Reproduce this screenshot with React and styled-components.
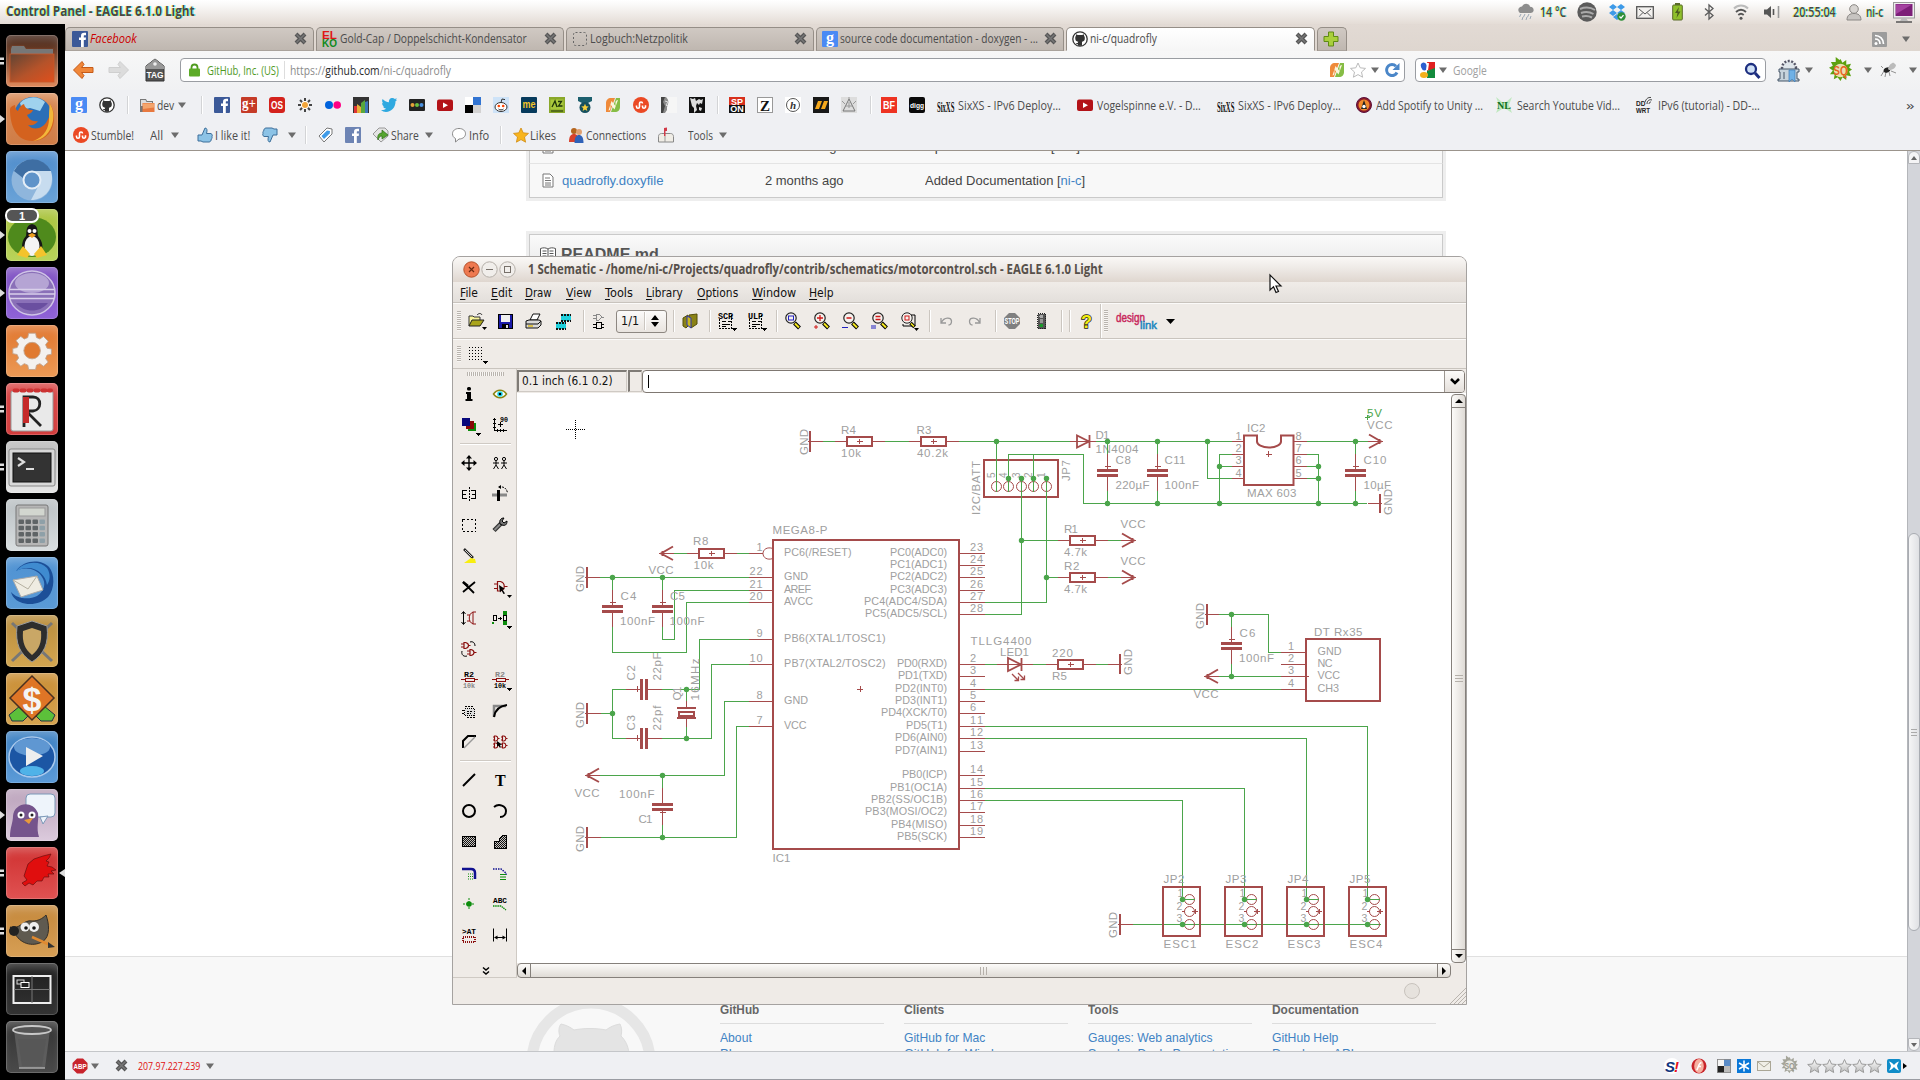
import React, { useLayoutEffect, useRef, useState } from "react";
import styled, { createGlobalStyle, css } from "styled-components";

const UI = '"Open Sans", "Noto Sans", sans-serif';
const RED = "#a54b4b";
const GREEN = "#4ba54b";
const GREY = "#a0a0a0";

const Global = createGlobalStyle`
  html, body { margin: 0; padding: 0; }
  body { width: 1920px; height: 1080px; overflow: hidden; background: #fff; font-family: ${UI}; }
  * { box-sizing: border-box; }
  svg { display: block; flex: none; overflow: visible; }
`;

/* ---------- text that keeps a given width ---------- */
const FitBox = styled.span`
  display: inline-block;
  width: ${(p) => p.$w}px;
  flex: none;
  white-space: pre;
`;
const FitInner = styled.span`
  display: inline-block;
  transform-origin: 0 50%;
  white-space: pre;
`;
function Fit({ w, children }) {
  const ref = useRef(null);
  const [s, setS] = useState(1);
  useLayoutEffect(() => {
    if (ref.current) setS(w / ref.current.offsetWidth);
  }, [w]);
  return (
    <FitBox $w={w}>
      <FitInner ref={ref} style={{ transform: `scaleX(${s})` }}>{children}</FitInner>
    </FitBox>
  );
}

/* ---------- rows of slots ---------- */
const StripRow = styled.div`
  display: flex;
  align-items: center;
  height: ${(p) => p.$h}px;
  padding-left: ${(p) => p.$pad || 0}px;
`;
const Cell = styled.div`
  flex: none;
  display: flex;
  align-items: center;
  width: ${(p) => (p.$w ? p.$w + "px" : "auto")};
`;
function Strip({ from, h, items }) {
  return (
    <StripRow $h={h} $pad={items[0][0] - from}>
      {items.map(([x, node], i) => (
        <Cell key={i} $w={i + 1 < items.length ? items[i + 1][0] - x : 0}>{node}</Cell>
      ))}
    </StripRow>
  );
}

/* ---------- small icons ---------- */
const Ico = ({ s = 16, w, h, vb, children, crisp }) => (
  <svg width={w || s} height={h || s} viewBox={vb || `0 0 ${w || s} ${h || s}`} fill="none" shapeRendering={crisp ? "crispEdges" : undefined}>
    {children}
  </svg>
);
const Letter = ({ bg, fg = "#fff", t, size = 11, font = "Liberation Sans", y = 12, r = 1, len, fs }) => (
  <Ico>
    <rect width="16" height="16" rx={r} fill={bg} />
    <text x="8" y={y} fontSize={size} fontFamily={font} fontWeight="bold" fontStyle={fs} textAnchor="middle" fill={fg} textLength={len} lengthAdjust="spacingAndGlyphs">{t}</text>
  </Ico>
);
const Down = ({ c = "#6c6c6c" }) => <Ico w={8} h={6}><path d="M0 0.5h8L4 6z" fill={c} /></Ico>;
const Fb = ({ bg = "#3b5998" }) => (
  <Ico><rect width="16" height="16" rx="1" fill={bg} /><path d="M9 16V9H7V6.6h2V5c0-2.2 1-3.2 3.2-3.2H14v2.5h-1.300C11.900 4.300 11.800 4.700 11.800 5.300v1.300H14L13.700 9h-1.900v7z" fill="#fff" /></Ico>
);
const Google = () => <Letter bg="#4a8af4" t="g" size={16} font="Liberation Serif" y={11.500} r={1} />;
const Octo = () => (
  <Ico><circle cx="8" cy="8" r="7.200" stroke="#333" strokeWidth="1.300" fill="#fff" /><path d="M3.400 8.500C3 6.500 3.500 5.300 4 4.800L3.900 3.200l2 .8h4.200l2-.8-.1 1.600c.8.8 1 2.200.7 3.700-.3 1.500-1.500 2-2.700 2.200v4H6v-1.500c-1.500.2-1.600-1-2.400-1.300l2.200.2c0-.6.2-1 .5-1.300C4.800 10.500 3.700 10 3.400 8.500z" fill="#333" /></Ico>
);
const Folder = () => (
  <Ico><path d="M1 2h6l1 2h6v11H1z" fill="#777" /><path d="M2 3h4.500l1 2H13v4H2z" fill="#ddd" /><rect x="3.500" y="6" width="12" height="9" fill="#e8793f" /><path d="M4 6.500h11v4L4 12z" fill="#f4a56d" /></Ico>
);
const YT = () => <Ico><rect y="2.500" width="16" height="11.500" rx="2" fill="#b31217" /><path d="M6 5.500l5 2.800-5 2.800z" fill="#fff" /></Ico>;
const Delicious = () => <Ico><path d="M0 0h8v8H0z" fill="#fff" /><path d="M8 0h8v8H8z" fill="#3274d2" /><path d="M0 8h8v8H0z" fill="#000" /><path d="M8 8h8v8H8z" fill="#d3d2d2" /></Ico>;
const Recoll = () => (
  <Ico>
    <path d="M1 15V6c0-3 2-5 5-5h4L5 15z" fill="#ef8a3a" />
    <path d="M15 1v9c0 3-2 5-5 5H6l5-14z" fill="#86bd45" />
    <path d="M3.500 13.500c1.500 0 2-1 2-2.500V7.500l4 5L13 3c-1.500 0-2.500 1-2.500 2.500V9l-4-5z" fill="#fbf6dc" />
  </Ico>
);
const Stumble = () => (
  <Ico><circle cx="8" cy="8" r="8" fill="#eb4924" /><path d="M3.500 8.500v1.200a1.500 1.500 0 003 0V6.500a1.500 1.500 0 013 0M9.500 8.500v1.200a1.500 1.500 0 003 0V8.200" stroke="#fff" strokeWidth="1.600" /></Ico>
);
const SixXS = () => (
  <Ico><text transform="translate(0 15) scale(.95 2.200)" fontSize="7" fontFamily="Liberation Serif" fontWeight="bold" fill="#111">SixXS</text></Ico>
);
const XIcon = ({ s = 13 }) => (
  <Ico s={s} vb="0 0 13 13"><path d="M2 2l9 9M11 2l-9 9" stroke="#555" strokeWidth="4" /><path d="M2.500 2.500l8 8M10.500 2.500l-8 8" stroke="#777" strokeWidth="1.500" /></Ico>
);
const SepLine = styled.span`
  display: block; width: 1px; height: 18px; background: #d3d4d6; border-right: 1px solid #fff; box-sizing: content-box;
`;

/* ---------- top panel ---------- */
const TopPanel = styled.header`
  height: 24px;
  background: linear-gradient(#ffffff, #faf9f8 20%, #e4dcd6);
  display: flex;
  color: #4a4744;
  font: 600 13.500px/24px ${UI};
  text-shadow: 1px 0 rgba(0, 255, 255, 0.6), -1px 0 rgba(255, 255, 0, 0.6);
`;
const PanelTitle = styled.div`
  width: 1517px; padding-left: 6px; font-weight: 700; line-height: 23px;
`;
const indicators = [
  [1517, <Ico w={18} h={18}><path d="M2 9a3.500 3.500 0 013-5.500C6 1 9 0 11 1.200c1.500.6 2 1.800 2 2.500 3 0 4 2 3.500 4.300-.5 1-1.500 2-3 2H4C3 10 2.300 9.600 2 9z" fill="#8d8d8d" /><path d="M4 11l-1.500 3M8 11l-1.500 3M12 11l-1.500 3M6 14l-1 3M10 14l-1 3M14 13l-1 3" stroke="#9aa7b5" /></Ico>],
  [1540, <Fit w={26}>14 °C</Fit>],
  [1577, <Ico w={20} h={20}><circle cx="10" cy="10" r="9.700" fill="#5b5b5b" /><path d="M3 7c5-2 11-1.500 15 1M4 11c4-1.500 9-1 12.500 1M5 14.500c3.500-1 7-.6 10 1" stroke="#aaa" strokeWidth="2" /></Ico>],
  [1608, <Ico w={18} h={17}><path d="M5 0l4 3-4 3-4-3zM13 0l4 3-4 3-4-3zM5 6l4 3-4 3-4-3zM13 6l4 3-4 3-4-3zM9 10l4 3-4 3-4-3z" fill="#3d9ae8" /><circle cx="13.500" cy="12.500" r="4.200" fill="#2f8f3a" /><path d="M11.500 12.500l1.500 1.600 2.500-3" stroke="#fff" strokeWidth="1.300" /></Ico>],
  [1636, <Ico w={18} h={13}><rect x=".7" y=".7" width="16.600" height="11.600" fill="#f3f1ef" stroke="#555" strokeWidth="1.300" /><path d="M3 3l6 5 6-5M3 10.500l4-4M15 10.500l-4-4" stroke="#555" /></Ico>],
  [1672, <Ico w={11} h={18}><rect x="3" y="0" width="5" height="3" fill="#5a6b2a" /><rect x=".7" y="2" width="9.600" height="15" rx="1" fill="#8fc02c" stroke="#5a6b2a" /><path d="M7 4L3 10h2.500L4.500 15 8.500 8.500H6z" fill="#4c5c20" /></Ico>],
  [1704, <Ico w={10} h={16}><path d="M1 4.500l8 7-4 3.500V1l4 3.500-8 7" stroke="#5b5b5b" strokeWidth="1.300" /></Ico>],
  [1733, <Ico w={16} h={16}><path d="M1 4.500c4-4 10-4 14 0" stroke="#bbb" strokeWidth="2" /><path d="M3 8c3-3 7-3 10 0M5.300 11c1.700-1.600 3.700-1.600 5.400 0" stroke="#555" strokeWidth="1.800" /><circle cx="8" cy="14.300" r="1.500" fill="#555" /></Ico>],
  [1764, <Ico w={16} h={16}><path d="M0 5.500h3L7 2v12l-4-3.500H0z" fill="#555" /><path d="M9.500 5v6" stroke="#555" strokeWidth="1.600" /><path d="M14.500 2v12" stroke="#999" strokeWidth="1.600" /></Ico>],
  [1793, <Fit w={43}>20:55:04</Fit>],
  [1846, <Ico w={16} h={17}><circle cx="8" cy="5" r="4.300" fill="#d7d4d1" stroke="#8a8784" /><path d="M1 16c0-5 3-6.500 7-6.500s7 1.500 7 6.500z" fill="#c7c4c1" stroke="#8a8784" /></Ico>],
  [1866, <Fit w={17}>ni-c</Fit>],
  [1893, <Ico w={22} h={21}><rect x=".5" y=".5" width="21" height="15.500" fill="#eee" stroke="#999" /><rect x="2.500" y="2" width="17" height="12" fill="#7c1f78" /><path d="M3 2.500h16L3 12z" fill="#a442a0" /><path d="M9 16h4l2 3H7z" fill="#bbb" /><path d="M3 20h16" stroke="#555" strokeWidth="1.500" /></Ico>],
];

/* ---------- launcher ---------- */
const Launcher = styled.nav`
  width: 65px; flex: none; background: #000; padding: 11px 0 0; display: flex; flex-direction: column; gap: 6px;
`;
const LaunchRow = styled.div`
  display: grid; grid-template-columns: 6px 52px 7px; align-items: center; height: 52px;
`;
const Tile = styled.div`
  width: 52px; height: 52px; border-radius: 5px;
  background: ${(p) => p.$bg};
  box-shadow: inset 0 0 0 1px rgba(255, 255, 255, 0.18), inset 0 8px 10px -4px rgba(255, 255, 255, 0.3);
`;
const Mark = ({ n, right }) =>
  !n ? <span /> : right ? (
    <Ico w={7} h={10}><path d="M7 1v8L1 5z" fill="#ddd" /></Ico>
  ) : n === 1 ? (
    <Ico w={6} h={10}><path d="M0 1v8l5-4z" fill="#ddd" /></Ico>
  ) : (
    <Ico w={6} h={10}><path d="M0 1.500h4v2.500H0zM0 6h4v2.500H0z" fill="#ddd" /></Ico>
  );
const T52 = ({ children }) => <svg width="52" height="52" viewBox="0 0 52 52" fill="none">{children}</svg>;
const grad = (a, b) => `linear-gradient(${a}, ${b})`;
const gearPath = "M22 10h8l1 5 4 1.700 4-3 5.500 5.500-3 4 1.700 4 5 1v6l-5 1-1.700 4 3 4L39 48l-4-3-4 1.700-1 5h-8l-1-5L17 45l-4 3-5.500-5.500 3-4-1.700-4-5-1v-6l5-1 1.700-4-3-4L13 13.700l4 3 4-1.700z";
const tiles = [
  { n: 2, bg: grad("#3a1c10", "#e08a5c"), el: <T52><path d="M4 46V12l2-2h12l2 3h28v33z" fill="#7a3f28" opacity=".55" /><path d="M5 14l1-3h12l2 3h27v5H5z" fill="#777" /><rect x="4" y="19" width="44" height="28" fill="url(#fo)" stroke="#c9582a" strokeWidth=".8" /><defs><linearGradient id="fo" x1="0" y1="0" x2="1" y2="1"><stop stopColor="#5f4434" /><stop offset=".55" stopColor="#b5532a" /><stop offset="1" stopColor="#e04f1c" /></linearGradient></defs></T52> },
  { n: 1, bg: grad("#d98c58", "#cf7c46"), el: <T52><circle cx="27" cy="23" r="19" fill="#2b6fb8" /><path d="M14 10c6-7 18-8 25-1l-5 9-10-3-8 2z" fill="#9fd2ee" /><path d="M4 16c0 18 7 32 22 32 14 0 22-10 22-23 0-7-2-11-4-14 1 8 0 12-3 17-4 8-14 10-19 4 5 1 8-1 10-4-6 1-9-2-11-6 2-1 5-2 6-5-5 0-8-2-9-6-3 1-5 4-6 7-2-1-3-3-3-6-3 1-5 2-5 4z" fill="#d4621e" /><path d="M44 11c3 5 4 10 3 17-2 12-10 19-20 20 12-4 16-14 16-22 0-6 0-10 1-15z" fill="#f3b63a" /></T52> },
  { bg: grad("#4d8bcb", "#6aa3d8"), el: <T52><circle cx="26" cy="29" r="20.500" fill="#8fb6dc" /><path d="M8 20a20.500 20.500 0 0137 0H26a9 9 0 00-9 7z" fill="#3e6ea3" /><path d="M34 32l-9 17c12 0 22-9 21-24l-1-5H29c4 2 6 6 5 12z" fill="#c7dcef" /><circle cx="26" cy="29" r="8.500" fill="#5f93c9" stroke="#e5eef7" strokeWidth="2" /></T52> },
  { n: 1, bg: grad("#a9c23c", "#b9d45a"), el: <T52><ellipse cx="26" cy="28" rx="24" ry="20" fill="#4f8a1c" /><path d="M20 45c-7-6-3-15 0-18 1-3-1-11 6-12 7 1 5 8 6 12 4 5 7 12 1 18z" fill="#161616" /><ellipse cx="26" cy="37" rx="7.500" ry="10" fill="#f4f4f4" /><circle cx="23.500" cy="22" r="2" fill="#fff" /><circle cx="28.500" cy="22" r="2" fill="#fff" /><path d="M22 26l4-2 4 2-4 3z" fill="#f0a020" /><path d="M11 46l6-9 7 8-3 4zM41 46l-6-9-7 8 3 4z" fill="#f3c32c" /><rect x="0" y="0" width="32" height="13" rx="6" fill="#555" stroke="#fff" strokeWidth="2" /><text x="16" y="10.500" fontSize="11" fontWeight="bold" fontFamily="Liberation Sans" fill="#fff" textAnchor="middle">1</text></T52> },
  { n: 1, bg: grad("#7d4fc0", "#8f62d8"), el: <T52><ellipse cx="26" cy="26" rx="23" ry="22" fill="#8a70b8" stroke="#cfc4e6" strokeWidth="1.500" /><ellipse cx="26" cy="16" rx="17" ry="10" fill="#b5a4d4" /><path d="M4 22.500h44M3 27h46M4 31.500h44" stroke="#d9d0ea" strokeWidth="1.500" /><path d="M10 36c8 10 24 10 32 0z" fill="#6a4fa0" /></T52> },
  { bg: grad("#e0742c", "#ec9a55"), el: <T52><g transform="translate(3.500 -.5) scale(.87)"><path d={gearPath} fill="#f4f1ee" stroke="#bfa28c" /><circle cx="26" cy="30" r="9.500" fill="#e07a30" stroke="#c2a48c" /></g></T52> },
  { n: 2, bg: grad("#d94848", "#d23c3c"), el: <T52><rect x="5" y="8" width="42" height="40" rx="2" fill="#e9e9e9" stroke="#999" /><path d="M8.500 7.500h3M15.500 7.500h3M22.500 7.500h3M29.500 7.500h3M36.500 7.500h3M43 7.500h2" stroke="#c33" strokeWidth="4" strokeLinecap="round" /><path d="M18 44V14h9c9 0 9 13 0 14h-7l15 15" stroke="#222" strokeWidth="2.800" /><rect x="17" y="14" width="6" height="26" fill="#c52a2a" /></T52> },
  { n: 2, bg: grad("#b8b8b8", "#e6e6e6"), el: <T52><rect x="3" y="8" width="46" height="37" rx="2" fill="#d8d8d8" stroke="#888" /><rect x="7" y="12" width="38" height="29" fill="#333" stroke="#111" /><path d="M12 17l6 4-6 4" stroke="#ddd" strokeWidth="2.200" /><path d="M20 28h8" stroke="#ddd" strokeWidth="2" /></T52> },
  { bg: grad("#b9bfc2", "#d9dee0"), el: <T52><rect x="10" y="6" width="32" height="41" rx="2" fill="#b6b6b6" stroke="#777" /><rect x="13" y="9" width="26" height="8" fill="#d2d6cf" stroke="#999" />{[0, 1, 2, 3].map((r) => [0, 1, 2, 3].map((c) => <rect key={r + "-" + c} x={12.500 + c * 7} y={20.500 + r * 6.300} width="5.500" height="4.500" rx="1" fill={c === 3 ? "#8ea0a8" : "#5f6466"} />))}</T52> },
  { bg: grad("#4f92d2", "#5a9ad6"), el: <T52><path d="M10 14C18 2 36 2 43 10c6 7 6 22-1 30-7 7-19 9-28 5-5-2-8-6-9-10 6 7 18 8 26 4 8-5 9-13 5-19-5-8-16-11-26-6z" fill="#1c4f98" /><path d="M10 14C18 4 34 3 41 11c4 6 3 13 0 17-1-9-9-17-19-17-4 0-8 1-12 3z" fill="#3f8bd0" /><path d="M7 23l24-4 6 14-22 7z" fill="#efece2" stroke="#aaa" /><path d="M7 23l15 9 9-13" stroke="#b5b0a0" /></T52> },
  { bg: grad("#b88c3c", "#d3a650"), el: <T52><path d="M6 8l40 38M46 8L6 46" stroke="#777" strokeWidth="3" /><path d="M26 6l15 5c2 18-3 28-15 36C14 39 9 29 11 11z" fill="#2d2d2d" stroke="#999" /><path d="M26 13l9 3c1 12-2 18-9 24-7-6-10-12-9-24z" fill="#c9a766" /></T52> },
  { bg: grad("#c98d34", "#d5a450"), el: <T52><path d="M3 42l11-9 9 9-6 6H6zM49 42l-11-9-9 9 6 6h11z" fill="#5cc03a" stroke="#234" /><path d="M26 3l22 22-22 22L4 25z" fill="#df7526" stroke="#4a3020" strokeWidth="1.500" /><text x="26" y="38" fontSize="34" fontFamily="Liberation Sans" fontWeight="bold" fill="#f4f4f4" textAnchor="middle">$</text></T52> },
  { bg: grad("#3a7ec0", "#5c9bd8"), el: <T52><ellipse cx="26" cy="26" rx="23" ry="20" fill="#1c56a4" stroke="#a9c9ec" strokeWidth="1.500" /><ellipse cx="26" cy="16" rx="18" ry="9" fill="#5f97d2" /><ellipse cx="26" cy="40" rx="12" ry="5" fill="#4fb2e8" /><path d="M20 16l17 9-17 10z" fill="#eee" /></T52> },
  { n: 1, bg: grad("#b9a0b9", "#dccbdd"), el: <T52><rect x="20" y="5" width="29" height="23" rx="4" fill="#eef4fb" stroke="#7b98b8" /><path d="M34 28l8-1-5 8z" fill="#eef4fb" stroke="#7b98b8" /><path d="M4 48c0-10 3-14 3-21C8 14 26 10 32 24c1 8-2 14 1 24z" fill="#75548c" /><circle cx="15" cy="26" r="3.500" fill="#fff" /><circle cx="26" cy="26" r="3.500" fill="#fff" /><circle cx="15" cy="26" r="1.500" fill="#222" /><circle cx="26" cy="26" r="1.500" fill="#222" /><path d="M18 31l9-2-4 6z" fill="#e89a3c" /></T52> },
  { n: 2, right: true, bg: grad("#cf3030", "#e05252"), el: <T52><path d="M16 36l5-3-3-4 2-6 2-6 6-5 9-3 8-2-2 4-3 3 3 1-2 4 5 1 4 3-5 1 3 3-6 0 1 3-5 0-2 4-5 0-4 4-4-2-4 3z" fill="#e00e0e" stroke="#5a0a0a" strokeWidth=".6" /></T52> },
  { n: 2, bg: grad("#c4873a", "#d79f55"), el: <T52><path d="M4 22c8 4 14-8 22-6 6 0 10-2 14-6 3 8 5 22-4 27-10 5-22 2-28-10z" fill="#5f5a50" stroke="#332e28" /><circle cx="8" cy="26" r="5" fill="#222" /><circle cx="19" cy="22" r="4.500" fill="#eee" /><circle cx="28" cy="22" r="5" fill="#eee" /><circle cx="20" cy="23" r="1.800" fill="#111" /><circle cx="28" cy="23" r="1.800" fill="#111" /><path d="M26 32l18 8" stroke="#e08a30" strokeWidth="2.500" /><path d="M42 37l7 5-7 1z" fill="#333" /></T52> },
  { bg: grad("#1e1e1e", "#333"), el: <T52><rect x="7.500" y="13" width="37" height="27" fill="none" stroke="#eee" strokeWidth="2" /><path d="M26 13v27M8 26.500h36" stroke="#777" /><rect x="11" y="17" width="7" height="4" stroke="#ddd" /><rect x="15" y="19.500" width="8" height="5" fill="#222" stroke="#fff" /></T52> },
  { bg: grad("#333", "#4a4a4a"), el: <T52><path d="M8 9l5 38h26l5-38z" fill="#6b6b6b" opacity=".65" /><path d="M12 18l4 27h20l4-27z" fill="#555" opacity=".7" /><ellipse cx="26" cy="9" rx="19" ry="4" fill="#555" stroke="#c8c8c8" strokeWidth="1.800" /><path d="M13 47h26" stroke="#aaa" strokeWidth="1.500" /></T52> },
];

/* ---------- browser ---------- */
const Body = styled.div`display: flex; height: 1056px;`;
const Browser = styled.main`
  flex: 1; min-width: 0; display: flex; flex-direction: column; font: 13.300px/18px ${UI}; color: #4c4c4c;
`;
const TabBar = styled.div`
  height: 27px; background: linear-gradient(#e2dad4, #ded6cf); display: flex; align-items: flex-end; padding-top: 3px;
`;
const Tab = styled.div`
  width: ${(p) => p.$w}px; height: 24px; margin-right: 2px; display: flex; align-items: center;
  padding: 0 6px 1px 5px; border: 1px solid #958e87; border-bottom-color: ${(p) => (p.$on ? "#f6f6f6" : "#aaa39c")};
  border-radius: 5px 5px 0 0;
  background: ${(p) => (p.$on ? "linear-gradient(#fff, #f6f6f6)" : "linear-gradient(#d0c9c3, #bfb7b0)")};
  ${(p) => p.$visited && css`color: #cc0000; font-style: italic; padding-left: 6px;`}
`;
const TabText = styled.span`flex: 1; margin-left: 2px; margin-top: -1px;`;
const TabTools = styled.div`
  margin-left: auto; align-self: stretch; display: flex; align-items: center; gap: 15px; padding-right: 10px;
`;
const NavBar = styled.div`
  height: 39px; background: linear-gradient(#f7f7f7, #f0f1f3); display: flex; align-items: flex-start; padding: 7px 0 0 7px;
`;
const NavIcon = styled.div`
  width: ${(p) => p.$w}px; height: 24px; display: flex; align-items: center; flex: none;
`;
const Field = styled.div`
  width: ${(p) => p.$w}px; height: 24px; flex: none; border: 1px solid #9a9da2; border-radius: 4px; background: #fff;
  display: flex; align-items: center; margin-right: ${(p) => p.$mr}px; padding: 0 4px 0 ${(p) => p.$pl}px;
`;
const Cert = styled.span`color: #4f9a1f; width: 84px; padding-left: 7px; flex: none;`;
const Url = styled.span`flex: 1; border-left: 1px solid #ddd; padding-left: 5px; color: #8c8c8c; b { font-weight: 400; color: #2b2b2b; }`;
const Hint = styled.span`flex: 1; color: #a0a0a0; padding-left: 6px;`;
const Marks = styled.div`background: #eff0f3; height: 61px; border-bottom: 1px solid #9b948c;`;
const Spread = styled.div`display: flex; align-items: center; gap: ${(p) => p.$g}px;`;

const SQ = ({ c = "#5da10f", t = "#e8641e", s = 23, paper = "#eadfb0" }) => (
  <Ico s={s} vb="0 0 24 24"><path d="M12 0l2 4 4-3 0 5 5-1-2 4 3 2-3 2 2 5-5-1 0 5-4-3-2 4-3-4-4 2 1-5-5 0 3-4-4-3 4-2-2-4 5 0 0-5 4 3z" fill={c} /><circle cx="12" cy="12" r="7" fill={paper} /><text x="12" y="17" fontSize="13" fontFamily="Liberation Sans" fontWeight="bold" textAnchor="middle" fill={t} textLength="15" lengthAdjust="spacingAndGlyphs">SQ</text></Ico>
);
const Arrow = ({ back }) => (
  <Ico w={22} h={20}>{back ? <path d="M10 1.500L1.500 10 10 18.500l2-3-2.500-3H21v-5H9.500l2.500-3z" fill="#f0873a" stroke="#c65a17" /> : <path d="M12 1.500L20.500 10 12 18.500l-2-3 2.500-3H1v-5h11.500l-2.500-3z" fill="#dcdcdc" stroke="#cfcfcf" />}</Ico>
);
const Thumb = ({ flip }) => (
  <Ico><g transform={flip ? "rotate(180 8 8)" : undefined}><path d="M1 8h4l3-7c2 0 2.500 2 1.500 5.500H14c1.500 1 1.500 2 1 3 .3 1 0 2-.7 2.500 0 1.500-.8 3-2.300 3H6l-2-1H1z" fill="#8cc3e6" stroke="#3d6f9a" /></g></Ico>
);

const bookmarks = [
  [71, <Google />], [99, <Octo />], [127, <SepLine />], [139, <Folder />],
  [157, <Fit w={17}>dev</Fit>], [178, <Down />], [201, <SepLine />],
  [214, <Fb />],
  [241, <Letter bg="#c53b27" t="g+" size={14} font="Liberation Serif" y={11} len={14} />],
  [269, <Letter bg="#d4221c" t="OS" size={10} len={12} y={11.500} r={3} />],
  [297, <Ico><g stroke="#444" strokeWidth="2">{[0, 45, 90, 135, 180, 225, 270, 315].map((a) => <path key={a} d="M8 1v3" transform={`rotate(${a} 8 8)`} />)}</g><circle cx="8" cy="8" r="3.600" fill="#f2a53a" stroke="#fff" /></Ico>],
  [325, <Ico><circle cx="4" cy="8" r="4" fill="#0063dc" /><circle cx="12.200" cy="8" r="3.800" fill="#ff0084" /></Ico>],
  [353, <Ico><rect width="16" height="16" fill="#333" /><path d="M1 16V9h3v7z" fill="#d33" /><path d="M4 16V7l4 3v6z" fill="#e8b03a" /><path d="M8 16V6l4-3v13z" fill="#58a83c" /><path d="M12 16V5l3-1v12z" fill="#3d76b8" /></Ico>],
  [381, <Ico><path d="M0 13c2 .2 4-.3 5-1.500-1.500 0-2.500-1-3-2h1.400C2 9 1 7.500 1 6l1.400.4C1 5.300.8 3.500 1.600 2 3.300 4 5.500 5.200 8 5.300 7.500 2.500 9.500 1 11.400 1c1 0 1.800.4 2.400 1l2-.8c-.2.800-.700 1.400-1.300 1.800L16 2.700c-.4.700-1 1.200-1.500 1.600C14.800 10 10.500 15 5 15c-2 0-3.500-.800-5-2z" fill="#2fa9e0" /></Ico>],
  [409, <Ico><rect y="2" width="16" height="12" rx="1" fill="#222" /><circle cx="3.500" cy="8" r="2" fill="#e8a23a" /><circle cx="8" cy="8" r="2" fill="#6cc040" /><circle cx="12.500" cy="8" r="2" fill="#4a90e0" /></Ico>],
  [437, <YT />], [465, <Delicious />],
  [493, <Ico><rect width="16" height="16" fill="#cee3f8" /><ellipse cx="8" cy="10" rx="6" ry="4.500" fill="#fff" stroke="#333" /><circle cx="5.800" cy="9" r="1.300" fill="#f40" /><circle cx="10.200" cy="9" r="1.300" fill="#f40" /><path d="M8 5.500L9 2l3 .6M5.500 12c1.500 1.200 3.500 1.200 5 0" stroke="#333" /></Ico>],
  [521, <Letter bg="#063a5c" fg="#f3c52a" t="me" size={10} y={10.500} len={13} />],
  [549, <Ico><rect width="16" height="16" fill="#8aa82a" /><rect x="1.500" y="2.500" width="13" height="10" fill="#a9c83c" /><path d="M3 10l3-6 2 6M9 4.500h3.500L9.500 9h4" stroke="#20350a" strokeWidth="1.300" /><path d="M2 14h12" stroke="#20350a" /></Ico>],
  [577, <Ico><path d="M1 0h14v4l-4 2H5L1 4z" fill="#1c5f6e" /><circle cx="8" cy="10.500" r="5.500" fill="#16505e" /><path d="M8 6.800l1.100 2.500 2.600.2-2 1.800.6 2.600L8 12.500l-2.300 1.400.6-2.600-2-1.800 2.600-.2z" fill="#f5cf3a" /></Ico>],
  [605, <Recoll />], [633, <Stumble />],
  [661, <Ico><rect width="16" height="16" fill="#f6f6f6" /><path d="M0 0h5c3 3 3 6 1 9v4L4 16H0z" fill="#8a8a8a" /><path d="M0 0h4L2 5l2 4-2 7H0z" fill="#444" /><path d="M4 4l3 1-2 3 2 2" stroke="#ddd" /></Ico>],
  [689, <Ico><rect width="16" height="16" fill="#111" /><path d="M1 1l3 1 2-1 1 3 3-2 2 1 2-1-1 5-2-1-1 2-2-2-1 3 1 4-3 3 0-5-2-2zM10 10l3 1-1 3-2-1z" fill="#ddd" /></Ico>],
  [717, <SepLine />],
  [729, <Ico><rect width="16" height="8" fill="#d8301c" /><rect y="8" width="16" height="8" fill="#111" /><text x="8" y="7.700" fontSize="9" fontFamily="Liberation Sans" fontWeight="bold" textAnchor="middle" fill="#fff">SP</text><text x="8" y="15.300" fontSize="9" fontFamily="Liberation Sans" fontWeight="bold" textAnchor="middle" fill="#fff">ON</text></Ico>],
  [757, <Ico><rect x=".5" y=".5" width="15" height="15" fill="#fff" stroke="#999" /><text x="8" y="13.500" fontSize="15" fontFamily="Liberation Serif" fontWeight="bold" textAnchor="middle" fill="#111">Z</text></Ico>],
  [785, <Ico><rect width="16" height="16" fill="#fff" /><circle cx="8" cy="8" r="6.500" stroke="#555" /><text x="8" y="12" fontSize="11" fontFamily="Liberation Serif" fontStyle="italic" fontWeight="bold" textAnchor="middle" fill="#333">h</text></Ico>],
  [813, <Ico><rect width="16" height="16" fill="#181818" /><path d="M2 12l3-8h4l-3 8zM8 12l3-8h4l-3 8z" fill="#f5a81c" /></Ico>],
  [841, <Ico><rect width="16" height="16" fill="#ddd" /><path d="M8 2l6 12H2z" stroke="#777" /><path d="M8 5v6M5 9h6M1 4l3 3M15 4l-3 3M8 0v2" stroke="#999" /></Ico>],
  [870, <SepLine />],
  [881, <Letter bg="#ee3322" t="BF" size={11} len={12} r={0} />],
  [909, <Letter bg="#0a0a0a" t="digg" size={8} len={14} y={10.500} r={2} />],
  [937, <SixXS />], [958, <Fit w={103}>SixXS - IPv6 Deploy...</Fit>],
  [1077, <YT />], [1097, <Fit w={104}>Vogelspinne e.V. - D...</Fit>],
  [1217, <SixXS />], [1238, <Fit w={103}>SixXS - IPv6 Deploy...</Fit>],
  [1356, <Ico><circle cx="8" cy="8" r="7.500" fill="#8b1c28" stroke="#5a0f3c" /><circle cx="8" cy="8" r="5.500" fill="#f08a2c" /><path d="M5 12l3-9 3 9z" fill="#222" /><circle cx="8" cy="9.500" r="1.700" fill="#fff" /></Ico>],
  [1376, <Fit w={107}>Add Spotify to Unity ...</Fit>],
  [1496, <Ico><path d="M0 0l6 5h4l6-5-3 8 3 8-6-4H6l-6 4 3-8z" fill="#bfe8bf" /><text x="8" y="12" fontSize="10.500" fontFamily="Liberation Serif" fontWeight="bold" textAnchor="middle" fill="#107020" textLength="14" lengthAdjust="spacingAndGlyphs">NL</text></Ico>],
  [1517, <Fit w={103}>Search Youtube Vid...</Fit>],
  [1636, <Ico><text x="0" y="9" fontSize="6.500" fontFamily="Liberation Sans" fontWeight="bold" fill="#222">DD</text><text x="0" y="16" fontSize="6.500" fontFamily="Liberation Sans" fontWeight="bold" fill="#222" textLength="14" lengthAdjust="spacingAndGlyphs">WRT</text><path d="M11 7c0-3 2-5 5-4M9 5c1-3 3-5 6-4.500M13 7c0-1.500 1-2 2-2" stroke="#444" /></Ico>],
  [1658, <Fit w={102}>IPv6 (tutorial) - DD-...</Fit>],
  [1906, <Fit w={9}>»</Fit>],
];

const stumbleBar = [
  [73, <Stumble />], [91, <Fit w={43}>Stumble!</Fit>], [150, <Fit w={13}>All</Fit>], [171, <Down />],
  [197, <Thumb />], [215, <Fit w={35}>I like it!</Fit>], [262, <Thumb flip />], [288, <Down />], [305, <SepLine />],
  [317, <Ico><path d="M2 9L10 1l5 1v5L7 15z" fill="#fff" stroke="#777" /><path d="M4.500 9L10 3.500l3 .5-.3 2.500L7 12z" fill="#3f9be8" /></Ico>],
  [345, <Fb bg="#6d84b4" />],
  [373, <Ico><path d="M0 7l6-6h6l3 3v5l-7 6z" fill="#e4e4e4" stroke="#999" /><path d="M5 13c-1-5 1-7 4-7V3l6 5-6 4V9c-2 0-3 1-4 4z" fill="#55a52f" stroke="#2f6c18" strokeWidth=".7" /></Ico>],
  [391, <Fit w={28}>Share</Fit>], [425, <Down />],
  [451, <Ico><path d="M8 1.500c4 0 6.500 2.300 6.500 5.200S12 12 8 12l-3.500 3v-3.500C2.500 10.500 1.500 9 1.500 6.700 1.500 3.800 4 1.500 8 1.500z" fill="#fff" stroke="#888" /></Ico>],
  [469, <Fit w={20}>Info</Fit>], [500, <SepLine />],
  [513, <Ico><path d="M8 1l2.200 4.800 5.300.6-4 3.600 1.100 5.200L8 12.600l-4.600 2.600L4.500 10l-4-3.600 5.300-.6z" fill="#f8b51d" stroke="#d08a10" strokeWidth=".8" /></Ico>],
  [530, <Fit w={26}>Likes</Fit>],
  [569, <Ico w={14} h={16}><circle cx="5" cy="4" r="3" fill="#b5651d" /><path d="M0 15c0-6 2-8 5-8s5 2 5 8z" fill="#d8412c" /><circle cx="10" cy="5" r="3" fill="#e0a070" /><path d="M5.500 16c0-6 2-8 4.500-8s4.500 2 4.500 8z" fill="#2f62b8" /></Ico>],
  [586, <Fit w={60}>Connections</Fit>],
  [658, <Ico><path d="M.5 15V9.500c0-3 3-3 3-3h9c3 0 3 3 3 3V15z" fill="#f0ede6" stroke="#888" /><path d="M7 15V9" stroke="#999" /><path d="M6 9V1l3-.5V4L7.500 4v5z" fill="#d23a48" /></Ico>],
  [688, <Fit w={25}>Tools</Fit>], [719, <Down />],
];

/* ---------- web page ---------- */
const Viewport = styled.div`flex: none; height: 900px; display: flex;`;
const PageBody = styled.div`
  flex: 1; overflow: hidden; background: #fff; font: 13.300px/17px "Liberation Sans", Arial, sans-serif; color: #444;
  a { color: #4183c4; }
`;
const FileBox = styled.div`
  width: 920px; margin: -21px 0 30px 461px; border: solid #eee; border-width: 0 3px 3px;
`;
const FileRow = styled.div`
  display: flex; align-items: center; height: ${(p) => p.$h}px; background: #f8f8f8;
  border: solid #cacaca; border-width: 0 1px ${(p) => (p.$last ? 1 : 0)}px; padding-left: 12px;
  & + & { border-top: 1px solid #e4e4e4; }
`;
const FileCol = styled.div`width: ${(p) => p.$w}px; flex: none; display: flex;`;
const Readme = styled.div`
  width: 920px; height: 690px; margin-left: 461px; border: 3px solid #eee; background: #fff;
`;
const ReadmeHead = styled.div`
  height: 684px; border: 1px solid #cacaca; background: linear-gradient(#fafafa, #eaeaea 33px, #fff 34px);
  font: 700 16.500px/20px "Liberation Sans", Arial, sans-serif; color: #555; display: flex; align-items: flex-start; gap: 5px; padding: 9px 0 0 10px;
  svg { margin-top: 3px; }
`;
const Footer = styled.footer`
  margin-top: 35px; height: 95px; border-top: 1px solid #e0e0e0; background: #f8f8f8; display: flex; padding-left: 461px;
`;
const FootCols = styled.div`display: flex; gap: 20px; padding: 45px 0 0 64px;`;
const FootCol = styled.div`
  width: 164px; display: flex; flex-direction: column;
  h4 { margin: 0 0 5px; height: 22px; flex: none; border-bottom: 1px solid #ddd; font: 700 13.300px/15px "Liberation Sans", Arial, sans-serif; color: #666; }
  a { height: 16px; line-height: 17px; flex: none; }
`;
const Scroll = styled.div`
  width: 13px; flex: none; background: #d3d5da; border-left: 1px solid #b4b6ba; display: flex; flex-direction: column;
`;
const ScrollBtn = styled.div`
  height: 13px; flex: none; background: #f4f4f5; border: 1px solid #b4b6ba; border-radius: ${(p) => (p.$up ? "6px 6px 0 0" : "0 0 6px 6px")};
  display: flex; align-items: center; justify-content: center; margin-top: ${(p) => (p.$up ? 0 : "auto")};
`;
const ScrollThumb = styled.div`
  height: 398px; flex: none; margin-top: 369px; border: 1px solid #a9acb2; border-radius: 6px; background: linear-gradient(90deg, #f5f5f6, #e0e1e4);
  display: flex; align-items: center; justify-content: center;
`;
const FileIcon = () => <Ico w={12} h={15}><path d="M1 1h7l3 3v10H1z" fill="#fff" stroke="#777" /><path d="M3 5h5M3 7.500h6M3 10h6M3 12h6" stroke="#777" /></Ico>;
const footer = [
  ["GitHub", 39, [["About", 32], ["Blog", 27]]],
  ["Clients", 40, [["GitHub for Mac", 81], ["GitHub for Windows", 112]]],
  ["Tools", 30, [["Gauges: Web analytics", 125], ["Speaker Deck: Presentations", 160]]],
  ["Documentation", 87, [["GitHub Help", 66], ["Developer API", 82]]],
];
const StatusBar = styled.div`
  height: 29px; background: #eff0f3; border-top: 1px solid #c4c6c9; border-bottom: 1px solid #9a9ca2; color: #e01010; font-size: 11.500px;
`;
const Star5 = () => (
  <Ico w={75} h={16}>{[0, 1, 2, 3, 4].map((i) => <path key={i} transform={`translate(${i * 15} 0)`} d="M7.500 1.500l2 4.500 4.800.5-3.600 3.200 1 4.800-4.200-2.500-4.200 2.500 1-4.800L.7 6.500 5.500 6z" fill={`url(#stg)`} stroke="#9b9b9b" />)}<defs><linearGradient id="stg" x1="0" y1="0" x2="0" y2="1"><stop stopColor="#fff" /><stop offset="1" stopColor="#bbb" /></linearGradient></defs></Ico>
);
const statusItems = [
  [72, <Ico><path d="M5 .5h6L15.500 5v6L11 15.500H5L.5 11V5z" fill="#c8232c" /><text x="8" y="11" fontSize="7" fontFamily="Liberation Sans" fontWeight="bold" fill="#fff" textAnchor="middle" textLength="13" lengthAdjust="spacingAndGlyphs">ABP</text></Ico>],
  [91, <Down />], [115, <XIcon />], [138, <Fit w={62}>207.97.227.239</Fit>], [206, <Down />],
  [1664, <Ico><circle cx="8" cy="8" r="8" fill="#fff" /><text x="1" y="13.500" fontSize="15" fontFamily="Liberation Sans" fontWeight="bold" fontStyle="italic" fill="#12357c">S<tspan fill="#e8141c" dx="-1">!</tspan></text></Ico>],
  [1691, <Ico><circle cx="8" cy="8" r="7.500" fill="#c8242a" /><ellipse cx="8" cy="8" rx="4.800" ry="7" fill="#f6b0a0" /><path d="M5.500 12c2-1 1.500-7 5-7.500M7 8.500h3" stroke="#fff" strokeWidth="1.500" /></Ico>],
  [1717, <Ico w={14} h={14} vb="0 0 16 16"><path d="M0 0h8v8H0z" fill="#f4f4f4" /><path d="M8 0h8v8H8z" fill="#5a8cc8" /><path d="M0 8h8v8H0z" fill="#222" /><path d="M8 8h8v8H8z" fill="#bbb" /><rect x=".5" y=".5" width="15" height="15" stroke="#888" /></Ico>],
  [1737, <Ico w={14} h={14}><rect width="14" height="14" fill="#0a78d8" /><path d="M7 1.500v11M2 4l10 6M12 4L2 10" stroke="#fff" strokeWidth="1.500" /></Ico>],
  [1757, <Ico w={14} h={10}><rect x=".5" y=".5" width="13" height="9" fill="#f0eee6" stroke="#aaa696" /><path d="M1 1l6 5 6-5" stroke="#aaa696" /></Ico>],
  [1781, <SQ c="#a5a59a" t="#999990" paper="#e8e8e4" s={17} />],
  [1807, <Star5 />],
  [1887, <Ico w={14} h={14}><rect width="14" height="14" rx="2" fill="#108cc8" /><path d="M2 2.500c2 .5 3.500 1.500 5 3.500 1.500-2 3-3 5-3.500-1 2-1.700 3-2 4.500.3 1.500 1 3 2 4.500-2-.5-3.500-1.500-5-3.500-1.500 2-3 3-5 3.500 1-1.500 1.700-3 2-4.500-.3-1.500-1-2.500-2-4.500z" fill="#fff" /></Ico>],
  [1903, <Ico w={4} h={6}><path d="M0 0l4 3-4 3z" fill="#000" /></Ico>],
];

/* ---------- EAGLE window ---------- */
const Win = styled.section`
  position: absolute; left: 452px; top: 256px; width: 1015px; height: 749px;
  border: 1px solid #a5a2a0; border-radius: 8px 8px 0 0; background: #efebe7; overflow: hidden;
  display: flex; flex-direction: column; font: 12.500px/16px "DejaVu Sans", sans-serif; color: #111;
`;
const TitleBar = styled.div`
  height: 25px; flex: none; background: linear-gradient(#faf8f6, #eeeae6 45%, #dfd6cf); display: flex; align-items: center; gap: 1px; padding-left: 10px;
  font: 700 13.500px/22px ${UI}; color: #57504a;
`;
const TitleText = styled.div`margin: -2px 0 0 11px;`;
const WinBtn = ({ kind }) => (
  <Ico s={17}>
    <circle cx="8.500" cy="8.500" r="7.700" fill={kind === "x" ? "#ee7950" : "#f1eeeb"} stroke={kind === "x" ? "#b5532e" : "#b5afa9"} />
    {kind === "x" && <path d="M6 6l5 5M11 6l-5 5" stroke="#6b2a12" strokeWidth="1.200" />}
    {kind === "-" && <path d="M5 8.500h7" stroke="#77706a" strokeWidth="1.200" />}
    {kind === "o" && <rect x="5.500" y="5.500" width="6" height="6" stroke="#77706a" />}
  </Ico>
);
const MenuBar = styled.div`
  height: 21px; flex: none; background: linear-gradient(#f0ece8, #e3dfdb); border-bottom: 1px solid #c8c3bd; line-height: 20px; padding-top: 1px;
  u { text-decoration-thickness: 1px; text-underline-offset: 2px; }
`;
const ToolBar = styled.div`
  height: ${(p) => p.$h}px; flex: none; border-top: 1px solid #fbfaf9; border-bottom: 1px solid #c9c4be;
`;
const Main = styled.div`display: flex; height: 609px; flex: none;`;
const Toolbox = styled.aside`
  width: 64px; flex: none; border-right: 1px solid #cfcac4; border-bottom: 1px solid #cfcac4; display: flex; flex-direction: column; align-items: stretch;
`;
const TGrip = styled.div`
  height: 4px; width: 37px; margin: 3px 0 2px 14px; background: repeating-linear-gradient(90deg, #b9b4ae 0 1px, #f8f6f4 1px 2px);
`;
const TGrid = styled.div`display: grid; grid-template-columns: 31.500px 31.500px; grid-auto-rows: 31px;`;
const TSlot = styled.div`display: flex; align-items: center; justify-content: center;`;
const TSep = styled.div`height: 2px; margin: ${(p) => p.$m}; background: #cfcac4; border-bottom: 1px solid #fff;`;
const Chevron = styled.div`flex: 1; display: flex; justify-content: center; align-items: flex-end; padding: 0 0 2px 3px;`;
const Right = styled.div`flex: 1; min-width: 0; display: flex; flex-direction: column;`;
const CmdRow = styled.div`height: 24px; display: flex; padding-top: 1px; flex: none;`;
const Sunken = styled.div`
  width: ${(p) => p.$w}px; height: 22px; margin-right: ${(p) => p.$mr || 0}px; border: solid #7f7b76; border-width: 2px 1px 1px 2px;
  border-right-color: #cfcac4; border-bottom-color: #cfcac4; padding-left: 3px; line-height: 18px; flex: none;
`;
const CmdInput = styled.div`
  flex: 1; height: 23px; margin-right: 1px; border: 1px solid #7f7872; border-radius: 4px; background: #fff; display: flex; align-items: stretch; padding-left: 5px;
`;
const Caret = styled.div`width: 1px; margin: 4px 0; background: #000;`;
const Drop = styled.div`
  width: 20px; margin-left: auto; border-left: 1px solid #9c9690; background: linear-gradient(#fcfbfa, #e4dfda); border-radius: 0 3px 3px 0; display: flex; align-items: center; justify-content: center;
`;
const CanvasRow = styled.div`display: flex; height: 570px; background: #fff;`;
const CanvasArea = styled.div`width: 934px; height: 570px; overflow: hidden; flex: none;`;
const VBar = styled.div`
  width: 15px; margin: 1px 0 0; border: 1px solid #85807b; border-radius: 4px; background: linear-gradient(90deg, #fcfbf9, #dfdbd6);
  display: flex; flex-direction: column; justify-content: space-between; align-items: center; height: 569px;
`;
const HBar = styled.div`
  width: 934px; height: 15px; border: 1px solid #85807b; border-radius: 4px; background: linear-gradient(#fcfbf9, #dfdbd6); display: flex; justify-content: space-between;
`;
const BarBtn = styled.div`
  width: 13px; height: 13px; flex: none; display: flex; align-items: center; justify-content: center; border: 0 solid #85807b;
  border-width: ${(p) => p.$b};
`;
const BarGrip = styled.div`align-self: center; margin: auto;`;
const WinStatus = styled.div`
  flex: 1; display: flex; justify-content: flex-end; align-items: center;
`;
const SpinBox = styled.div`
  width: 51px; height: 23px; border: 1px solid #8d8781; border-radius: 3px; background: linear-gradient(#fbfaf9, #e9e4df); display: flex; align-items: center; padding-left: 4px; gap: 5px; line-height: 20px;
`;
const VSep = styled.div`width: 2px; height: ${(p) => p.$h || 22}px; background: #cbc6c0; border-right: 1px solid #fff;`;
const VGrip = styled.div`width: 4px; height: ${(p) => p.$h || 20}px; background: repeating-linear-gradient(#b9b4ae 0 1px, #f8f6f4 1px 2px);`;

const menus = [
  [459.500, 18, "F", "ile"], [491, 21, "E", "dit"], [525, 27, "D", "raw"], [566, 26, "V", "iew"], [605, 28, "T", "ools"],
  [646, 37, "L", "ibrary"], [697, 41, "O", "ptions"], [752, 44, "W", "indow"], [809, 25, "H", "elp"],
];

const DD = ({ x = 14, y = 16 }) => <path d={`M${x} ${y}h5l-2.500 3z`} fill="#000" />;
const Mag = ({ c, extra }) => (
  <Ico w={18} h={18}><path d="M10.500 11l5 5" stroke="#000" strokeWidth="4" /><path d="M11 11.500l4 4" stroke="#f4e820" strokeWidth="2" /><circle cx="7" cy="6" r="5.200" fill="#f6f2ee" stroke="#222" strokeWidth="1.200" />{c}{extra}</Ico>
);
const Doc = ({ t }) => (
  <Ico w={18} h={18} crisp><path d="M1.500 7v9.500h12V2" stroke="#000" strokeDasharray="2 1" /><path d="M4 9.500h4M10 9.500h3M4 12.500h8M4 14.500h4" stroke="#000" /><text x="0" y="7" fontSize="8.500" fontFamily="Liberation Mono" fontWeight="bold" fill="#000" textLength="15">{t}</text><DD x={14} y={16} /></Ico>
);
const toolbar = [
  [457, <VGrip />],
  [468, <Ico w={19} h={18}><path d="M1 14V4h4l1 1h6v3" fill="#f8f49a" stroke="#333" /><path d="M1 14l3-6h12l-4 6z" fill="#a9a41a" stroke="#222" /><path d="M9 3c2-2 4-2 5 0" stroke="#222" /><DD x={14} y={15} /></Ico>],
  [498, <Ico w={15} h={15} crisp><rect x=".5" y=".5" width="14" height="14" fill="#1a1aa8" stroke="#000" /><rect x="3" y="1" width="9" height="7" fill="#efefef" /><rect x="4" y="10" width="7" height="4" fill="#000" /><rect x="8" y="11" width="2" height="3" fill="#ddd" /></Ico>],
  [525, <Ico w={17} h={17}><path d="M5 7l3-6h7l-3 6z" fill="#fff" stroke="#111" /><path d="M1 8l3-1h10l2 1v4l-3 3H1z" fill="#d8d8d8" stroke="#111" /><path d="M1 11h12M13 11l3-3" stroke="#111" /><path d="M3 13h5" stroke="#d8b820" strokeWidth="1.500" /></Ico>],
  [556, <Ico w={15} h={17} crisp><path d="M5 1h10v7H5z" fill="#1ed0dc" /><path d="M5 1.500h10M5 7.500h10" stroke="#111" strokeWidth="2" strokeDasharray="2 1" /><path d="M0 9h10v7H0z" fill="#1ed0dc" /><path d="M0 9.500h10M0 15.500h10" stroke="#111" strokeWidth="2" strokeDasharray="2 1" /></Ico>],
  [583, <VSep />],
  [593, <Ico w={11} h={17} crisp><path d="M3 1h3l3 3-3 3H3zM0 2.500h3M0 5.500h3M9 4h2" stroke="#888" /><path d="M3 9.500h5v6H3zM0 11h3M0 14h3M8 11h3M8 14h3" stroke="#000" /></Ico>],
  [616, <SpinBox><Fit w={18}>1/1</Fit><VSep $h={18} /><Ico w={8} h={12}><path d="M0 5h8L4 0zM0 7h8l-4 5z" fill="#000" /></Ico></SpinBox>],
  [673, <VSep />],
  [682, <Ico w={16} h={16}><path d="M1 5l5-3v11l-2 2-3-2zM7 2l8-1v10l-6 4z" fill="#8a8216" stroke="#554f08" /><path d="M5 3l4 2v10l-4-3z" fill="#c9b81c" stroke="#2c35b8" /></Ico>],
  [709, <VSep />],
  [718, <Doc t="SCR" />], [748, <Doc t="ULP" />],
  [776, <VSep />],
  [784, <Mag c={<rect x="4.500" y="4" width="5" height="4" stroke="#2020c0" />} />],
  [813, <Mag c={<path d="M4 6h6M7 3v6" stroke="#d01818" strokeWidth="1.300" />} extra={<path d="M1 15h4M3 13v4" stroke="#d01818" />} />],
  [842, <Mag c={<path d="M4.500 6h5" stroke="#d01818" strokeWidth="1.300" />} extra={<path d="M0 15.500h6" stroke="#2020c0" />} />],
  [871, <Mag c={<path d="M4.500 4.500h5M4.500 7.500h5" stroke="#d01818" strokeWidth="1.300" />} extra={<path d="M0 14h5M0 16h5" stroke="#2020c0" />} />],
  [900, <Ico w={19} h={18}><path d="M10 3h5v11H3v-2" stroke="#000" /><path d="M10.500 11l4 4" stroke="#000" strokeWidth="3.500" /><path d="M11 11.500l3 3" stroke="#f4e820" strokeWidth="1.700" /><circle cx="7" cy="6" r="5.200" fill="#f6f2ee" stroke="#222" /><rect x="5" y="4" width="4" height="4" stroke="#d01818" /><DD x={14} y={16} /></Ico>],
  [929, <VSep />],
  [940, <Ico w={13} h={10}><path d="M1 2v5h5M1.500 6.500C4 1 11 1 11.500 5c0 2-1 4-3 4" stroke="#999" strokeWidth="1.300" /></Ico>],
  [968, <Ico w={13} h={10}><path d="M12 2v5H7M11.500 6.500C9 1 2 1 1.500 5c0 2 1 4 3 4" stroke="#999" strokeWidth="1.300" /></Ico>],
  [995, <VSep />],
  [1004, <Ico w={16} h={16}><path d="M5 0h6l5 5v6l-5 5H5l-5-5V5z" fill="#808080" /><text x="8" y="11" fontSize="8.500" fontFamily="Liberation Sans" fontWeight="bold" fill="#fff" textAnchor="middle" textLength="15" lengthAdjust="spacingAndGlyphs">STOP</text></Ico>],
  [1037, <Ico w={9} h={17} crisp><rect x=".5" y=".5" width="8" height="15" fill="#555" stroke="#222" strokeDasharray="1 1" /><circle cx="4.500" cy="3.500" r="2" fill="#aaa" /><circle cx="4.500" cy="8" r="2" fill="#999" /><circle cx="4.500" cy="12.500" r="2" fill="#1a9a2a" /></Ico>],
  [1061, <VSep />], [1069, <VSep />],
  [1081, <Ico w={12} h={17}><text x="0" y="15" fontSize="18" fontFamily="Liberation Sans" fontWeight="bold" fill="#f6ee10" stroke="#222" strokeWidth="1.500" paintOrder="stroke">?</text></Ico>],
  [1100, <VSep $h={34} />], [1104, <VGrip $h={22} />],
  [1116, <Ico w={41} h={18}><text x="0" y="9.500" fontSize="13" fontFamily="Liberation Sans" fill="#c8285c" stroke="#c8285c" strokeWidth=".5" textLength="29" lengthAdjust="spacingAndGlyphs">design</text><text x="24" y="17" fontSize="11.500" fontFamily="Liberation Sans" fill="#1c86be" stroke="#1c86be" strokeWidth=".5" textLength="17" lengthAdjust="spacingAndGlyphs">link</text></Ico>],
  [1166, <Ico w={9} h={5}><path d="M0 0h9L4.500 5z" fill="#000" /></Ico>],
];
const gridBar = [
  [457, <VGrip $h={16} />],
  [469, <Ico w={19} h={17} crisp>{[0, 3, 6, 9, 12].map((y) => <path key={y} d={`M0 ${y + 1.500}h14`} stroke="#000" strokeDasharray="1 2" />)}<DD x={14} y={15} /></Ico>],
];

/* toolbox icons share a 20 by 20 box */
const B = ({ children, soft, dd }) => (
  <svg width="20" height="20" viewBox="0 0 20 20" fill="none" stroke="#000" shapeRendering={soft ? undefined : "crispEdges"}>{children}{dd && <path d="M17 18h5l-2.500 3z" fill="#000" stroke="none" />}</svg>
);
const BT = ({ x, y, s = 8, f = "#000", t, w, font = "Liberation Mono", b = "bold" }) => (
  <text x={x} y={y} fontSize={s} fontFamily={font} fontWeight={b} fill={f} stroke="none" textLength={w} lengthAdjust="spacingAndGlyphs">{t}</text>
);
const DR = "#8b1010";
const toolsA = [
  <B soft><rect x="8" y="3" width="4" height="3.500" rx="1.500" fill="#000" stroke="none" /><path d="M7 8h5v7h1.500v2H6.500v-2H8v-5H7z" fill="#000" stroke="none" /></B>,
  <B soft><path d="M3.500 10c3.500-5 9.500-5 13 0-3.500 5-9.500 5-13 0z" stroke="#8a8616" strokeWidth="1.500" fill="#fff" /><circle cx="10" cy="10" r="2.800" fill="#20d8e8" stroke="none" /><circle cx="10" cy="10" r="1.300" fill="#000" stroke="none" /></B>,
  <B dd><rect x="9" y="8" width="8" height="8" fill="#0c8c0c" stroke="none" /><rect x="7" y="6" width="8" height="8" fill="#8a0808" stroke="none" /><rect x="3" y="3" width="8" height="8" fill="#08087c" stroke="none" /></B>,
  <B><path d="M4 3v12M4 15.500h13M2.500 4.500h3M2.500 8.500h3M2.500 12.500h3M7.500 14v3M10.500 14v3M13.500 14v3M8 9.500h5M10.500 7v5" /><BT x={10} y={7} s={7} t="90" w={8} /></B>,
];
const toolsB = [
  <B soft><path d="M3 10h14M10 3v14" strokeWidth="1.400" /><path d="M10 2l3 3.500H7zM10 18l3-3.500H7zM2 10l3.500-3v6zM18 10l-3.500-3v6z" fill="#000" stroke="none" /></B>,
  <B soft>{[6, 14].map((x) => <g key={x}><circle cx={x} cy="6" r="1.600" /><path d={`M${x} 8v4l-2.500 4M${x} 12l2.500 4M${x - 3} 10h6`} /></g>)}</B>,
  <B><path d="M10.500 3v15" strokeDasharray="2 1" /><path d="M3.500 6v9M3 6.500h5M3 10.500h4M3 14.500h5M16.500 6v9M12 6.500h5M13 10.500h4M12 14.500h5" /></B>,
  <B soft><path d="M2 11h15" stroke="#888" strokeWidth="3" /><path d="M8.500 6v11" strokeWidth="3" /><path d="M9 3c5-1 8 2 8.500 6" strokeDasharray="2 1" /><path d="M8 3l3-2v4z" fill="#000" stroke="none" /></B>,
  <B><rect x="3.500" y="4.500" width="13" height="12" strokeDasharray="2 2" /></B>,
  <B soft><path d="M4 15.500l7-7" stroke="#333" strokeWidth="4.500" /><path d="M4.500 15l7-7" stroke="#888" strokeWidth="2" /><path d="M10 9c-1-4 1-6 4-6l-2 3 2 2 3-2c0 4-2 5-5 4z" fill="#777" /></B>,
  <B soft><path d="M5 3l9 9" stroke="#222" strokeWidth="2.500" /><path d="M6 4l7 7" stroke="#fff" strokeWidth=".8" /><path d="M5 17l7-5 4 1 1 4z" fill="#f8ee10" stroke="none" /></B>,
  null,
  <B soft><path d="M4 5l11 11M16 5L4 15" strokeWidth="1.800" /><path d="M4 5l5 4" strokeWidth="2.500" /></B>,
  <B dd soft><path d="M7.500 4.500h3c5 1.500 5 8 0 9.500h-3zM4 7h3.500M4 11.500h3.500M14.500 9.500h3" stroke={DR} strokeWidth="1.200" /><path d="M9 8l6 4-2.500.5L15 16.500l-1.500.5-2-3.500-1.500 2z" fill="#000" stroke="none" /></B>,
  <B soft><path d="M4.500 4v12M2.500 6l2-2.500L6.500 6M2.500 14l2 2.500 2-2.500" /><path d="M17 4h-3c-5 2-5 10 0 12h3M8 7h3M8 13h3M14 4v12" stroke={DR} /></B>,
  <B dd><rect x="3.500" y="7.500" width="3" height="5" /><path d="M8 10.500h4M10.500 9v3" /><rect x="13.500" y="7.500" width="3" height="5" /><rect x="13" y="3" width="4" height="4" fill="#0c8c0c" stroke="none" /><rect x="13" y="13" width="4" height="4" fill="#0c8c0c" stroke="none" /><rect x="2" y="14" width="2" height="2" fill="#0c8c0c" stroke="none" /></B>,
  <B soft><path d="M5 3.500h1.500c4 1 4 5 0 6H5zM2 5h3M2 8h3M9.500 6.500h2M11 10.500h1c4 1 4 5 0 6h-1zM8 12h3M8 15h3M15 13.500h2.500" stroke={DR} strokeWidth="1.200" /><path d="M11 3c3-1 5 1 5 4M8 17c-3 1-6-1-5-5" /></B>,
  null,
  <B><BT x={5} y={7} t="R2" w={10} s={8} /><path d="M2 9.500h4M15 9.500h4M6 8h9v3H6z" stroke={DR} /><BT x={4} y={18} t="10k" w={12} s={8} f="#888" /></B>,
  <B dd><BT x={5} y={7} t="R2" w={10} s={8} f="#888" /><path d="M2 9.500h4M15 9.500h4M6 8h9v3H6z" stroke={DR} /><BT x={4} y={18} t="10k" w={12} s={8} /></B>,
  <B><rect x="5.500" y="7.500" width="10" height="7" strokeDasharray="1 1" fill="#ddd" /><path d="M3 9.500h3M3 12.500h3M6 5.500h9M8 16.500h8M8 10.500h6M8 12.500h4" strokeDasharray="2 1" /></B>,
  <B soft><path d="M4 16V5h12" stroke="#888" strokeWidth="2.500" /><path d="M4 16c1-7 5-11 13-12" strokeWidth="2" /></B>,
  <B soft><path d="M4 16V9l5-5h8" strokeWidth="2" /><path d="M5 16L16 5" stroke="#999" strokeWidth="1.500" /></B>,
  <B soft>{[[3, 4], [11, 4], [3, 11], [11, 11]].map(([x, y]) => <path key={x + "," + y} d={`M${x} ${y + 1}h1.500M${x} ${y + 4}h1.500M${x + 1.500} ${y}h1.500c2.500 .8 2.500 4.200 0 5h-1.500zM${x + 5} ${y + 2.500}h1.500`} stroke={DR} strokeWidth="1.100" />)}<path d="M7 9l5 3.500-2 .5 1 2.500-1.500 0-1-2-1.500 1z" fill="#000" stroke="none" /></B>,
];
const Check = () => (
  <defs><pattern id="chk" width="2" height="2" patternUnits="userSpaceOnUse"><rect width="2" height="2" fill="#c8c4c0" stroke="none" /><rect width="1" height="1" fill="#111" stroke="none" /><rect x="1" y="1" width="1" height="1" fill="#111" stroke="none" /></pattern></defs>
);
const toolsC = [
  <B soft><path d="M4 16L16 4" strokeWidth="2" /></B>,
  <B soft><BT x={5} y={16} s={16} t="T" font="Liberation Serif" /></B>,
  <B soft><circle cx="10" cy="10" r="6" strokeWidth="2" /></B>,
  <B soft><path d="M4 6c5-4 12-1 12 4 0 3-2 6-6 6" strokeWidth="2" /></B>,
  <B><Check /><rect x="3.500" y="4.500" width="13" height="10" fill="url(#chk)" /></B>,
  <B><path d="M4.500 16.500v-7h5v-3l3-3h4v13z" fill="url(#chk)" /></B>,
  <B soft><path d="M3 6h9c3 0 4 2 4 4v6" stroke="#101090" strokeWidth="2.500" /><path d="M9 11h6M9 13.500h6M9 16h6" stroke="#0c8c0c" strokeDasharray="1 1" /></B>,
  <B soft><path d="M3 6h8l5 4v3" stroke="#101090" strokeWidth="1.500" strokeDasharray="1.500 1" /><path d="M10 11.500h6M10 14h6M10 16.500h6" stroke="#0c8c0c" /></B>,
  <B soft><circle cx="10" cy="10" r="2.800" fill="#0c8c0c" stroke="none" /><path d="M10 4v12M4 10h12" stroke="#0c8c0c" strokeDasharray="2 1" /></B>,
  <B soft><BT x={3} y={9} s={8} t="ABC" w={14} /><path d="M3 12h8l5 4" stroke="#0c8c0c" strokeWidth="1.300" strokeDasharray="1.500 .7" /></B>,
  <B><BT x={3} y={9} s={8} t=">AT" w={14} /><rect x="4" y="11.500" width="12" height="5" stroke={DR} strokeWidth="2" strokeDasharray="1 1" /></B>,
  <B soft><path d="M3.500 3.500v13M16.500 3.500v13M5 12.500h10" /><path d="M4 12.500l3.500-2v4zM16 12.500l-3.500-2v4z" fill="#000" stroke="none" /></B>,
];

/* ---------- schematic ---------- */
const L = ({ d, c = GREEN, w = 1 }) => <path d={d} stroke={c} strokeWidth={w} shapeRendering="crispEdges" />;
const J = ({ at }) => at.map(([x, y], i) => <circle key={i} cx={x + 0.500} cy={y + 0.500} r="2.700" fill={GREEN} />);
const Tx = ({ x, y, w, t, s = 11.500, r, c = GREY }) => (
  <text x={x} y={y} fontSize={s} fontFamily="Liberation Sans, Arial, sans-serif" fill={c} textLength={w} lengthAdjust="spacing" transform={r ? `rotate(-90 ${x} ${y})` : undefined}>{t}</text>
);
const Res = ({ x, y, l = 12, r = 12 }) => (
  <g>
    <L c={RED} d={`M${x - l} ${y + 0.500}H${x}M${x + 26} ${y + 0.500}h${r}`} />
    <rect x={x} y={y - 4} width="25" height="9" stroke={RED} strokeWidth="2" shapeRendering="crispEdges" />
    <L c={RED} d={`M${x + 10} ${y + 0.500}h6M${x + 12.500} ${y - 2}v5`} />
  </g>
);
const CapV = ({ x, y, flip }) => (
  <g>
    <L c={RED} d={`M${x + 0.500} ${y}v15M${x + 0.500} ${y + 23}v14`} />
    <rect x={x - 10} y={y + 15} width="21" height="3" fill={RED} />
    <rect x={x - 10} y={y + 20} width="21" height="3" fill={RED} />
    <L c={RED} d={`M${x - 2} ${flip ? y + 24.500 : y + 12.500}h6`} />
  </g>
);
const CapH = ({ x, y }) => (
  <g>
    <L c={RED} d={`M${x} ${y + 0.500}h14M${x + 22} ${y + 0.500}h14`} />
    <rect x={x + 14} y={y - 10} width="3" height="21" fill={RED} />
    <rect x={x + 19} y={y - 10} width="3" height="21" fill={RED} />
    <L c={RED} d={`M${x + 11.500} ${y - 3}v6`} />
  </g>
);
const Gnd = ({ x, y, left = 2, right = 14, tx, ty }) => (
  <g>
    <L c={RED} w={2} d={`M${x} ${y - 10}v21`} />
    <L c={RED} d={`M${x - left} ${y + 0.500}H${x + right}`} />
    <Tx x={tx} y={ty} w={26} t="GND" r />
  </g>
);
/* arrow head of a supply symbol; dir 1 points right, -1 left */
const Vcc = ({ x, y, dir }) => (
  <g>
    <path d={`M${x - dir * 12} ${y - 6.500}L${x} ${y + 0.500}L${x - dir * 12} ${y + 7}M${x - dir * 1.500} ${y - 2}v5`} stroke={RED} strokeWidth="1.900" />
    <L c={RED} d={`M${x + dir * 2} ${y + 0.500}H${x - dir * 13}`} />
  </g>
);
const leftPins = [
  ["1", 553, "PC6(/RESET)", 67.500], ["22", 577, "GND", 24], ["21", 590, "AREF", 27], ["20", 602, "AVCC", 29],
  ["9", 639, "PB6(XTAL1/TOSC1)", 101.500], ["10", 664, "PB7(XTAL2/TOSC2)", 101.500], ["8", 701, "GND", 24], ["7", 726, "VCC", 22.500],
];
const rightPins = [
  ["23", 553, "PC0(ADC0)", 57], ["24", 565, "PC1(ADC1)", 57], ["25", 577, "PC2(ADC2)", 57], ["26", 590, "PC3(ADC3)", 57],
  ["27", 602, "PC4(ADC4/SDA)", 83], ["28", 614, "PC5(ADC5/SCL)", 82], ["2", 664, "PD0(RXD)", 50], ["3", 676, "PD1(TXD)", 49],
  ["4", 689, "PD2(INT0)", 52], ["5", 701, "PD3(INT1)", 52], ["6", 713, "PD4(XCK/T0)", 66], ["11", 726, "PD5(T1)", 41],
  ["12", 738, "PD6(AIN0)", 52], ["13", 751, "PD7(AIN1)", 52], ["14", 775, "PB0(ICP)", 45], ["15", 788, "PB1(OC1A)", 57],
  ["16", 800, "PB2(SS/OC1B)", 76], ["17", 812, "PB3(MOSI/OC2)", 82], ["18", 825, "PB4(MISO)", 56], ["19", 837, "PB5(SCK)", 50],
];
const escs = [[1163, 1182, "JP2", "ESC1"], [1225, 1244, "JP3", "ESC2"], [1287, 1306, "JP4", "ESC3"], [1349, 1367, "JP5", "ESC4"]];

function Schematic() {
  return (
    <svg width="935" height="570" viewBox="517 393 935 570" fill="none">
      <path d="M566 429.500h19M575.500 420v19" stroke="#000" strokeDasharray="1 1" shapeRendering="crispEdges" />
      {/* input divider */}
      <Gnd x={810} y={441} right={13} tx={807.500} ty={455} />
      <Res x={847} y={441} /><Res x={921} y={441} />
      <L d="M823 441.500h12M885 441.500h24M959 441.500h112M1096 441.500h136" />
      <Tx x={841} y={434} w={15} t="R4" /><Tx x={841} y={457} w={20} t="10k" />
      <Tx x={916.500} y={434} w={15} t="R3" /><Tx x={917} y={457} w={31} t="40.2k" />
      <path d="M1077 435.500v12l12-6zM1089.500 435v13" stroke={RED} strokeWidth="1.800" />
      <L c={RED} d="M1070 441.500h26" />
      <Tx x={1095.500} y={439} w={14} t="D1" /><Tx x={1095.500} y={453} w={43} t="1N4004" />
      {/* regulator */}
      <path d="M1244 435.500h13v6c0 3 5 6 12 6s12-3 12-6v-6h12.500v49.500H1244z" stroke={RED} strokeWidth="2" />
      <L c={RED} d="M1266 454.500h6M1268.500 451v6M1232 441.500h12M1232 454.500h12M1232 466.500h12M1232 478.500h12M1294 441.500h13M1294 454.500h13M1294 466.500h13M1294 478.500h13" />
      <Tx x={1247} y={432} w={18.500} t="IC2" /><Tx x={1247} y={497} w={49.500} t="MAX 603" />
      {["1", "2", "3", "4"].map((n, i) => <Tx key={n} x={1235.500} y={[440, 452, 464, 477][i]} t={n} s={11} />)}
      {["8", "7", "6", "5"].map((n, i) => <Tx key={n} x={1295.500} y={[440, 452, 464, 477][i]} t={n} s={11} />)}
      <L d="M1207.500 441v37.500H1232M1232 454.500h-12.500V503M1219 466.500h13M1307 454.500h11.500V503M1307 466.500h12M1307 478.500h12M1307 441.500h61M1367 503.500h-283.500v-49h-75.500" />
      {[1107, 1157, 1355].map((x) => <g key={x}><L d={`M${x + 0.500} 441v13M${x + 0.500} 491v13`} /><CapV x={x} y={454} /></g>)}
      <Tx x={1115.500} y={464} w={15.500} t="C8" /><Tx x={1115.500} y={489} w={34} t="220µF" />
      <Tx x={1164.500} y={464} w={21} t="C11" /><Tx x={1164.500} y={489} w={34.500} t="100nF" />
      <Tx x={1363.500} y={464} w={23} t="C10" /><Tx x={1363.500} y={489} w={27.500} t="10µF" />
      <Vcc x={1381} y={441} dir={1} /><Tx x={1367} y={429} w={25.500} t="VCC" />
      <Tx x={1367} y={417} w={15} t="5V" c={GREEN} /><L d="M1365 417.500h5M1367.500 415v5" />
      <L c={RED} w={2} d="M1380 494v19" /><L c={RED} d="M1368 503.500h14" /><Tx x={1392} y={515} w={26} t="GND" r />
      {/* I2C and battery header */}
      <rect x="984" y="460" width="74" height="37" stroke={RED} strokeWidth="2" shapeRendering="crispEdges" />
      {[996, 1008, 1021, 1033, 1046].map((x, i) => (
        <g key={x}>
          <circle cx={x + 0.500} cy="486.500" r="5" stroke={RED} />
          <Tx x={x - 1} y={478} t={String(5 - i)} s={10} r />
        </g>
      ))}
      <L d="M996.500 441v51M1008.500 454v38M1033.500 454v38M1021.500 478v136.500H985M1046.500 478v124.500H985" />
      <Tx x={1070} y={481} w={21} t="JP7" r /><Tx x={980} y={515} w={54} t="I2C/BATT" r />
      {/* pull-ups */}
      <Res x={1070} y={540} /><Res x={1070} y={577} />
      <L d="M1021 540.500h37M1046 577.500h12M1108 540.500h13M1108 577.500h13" />
      <Vcc x={1134} y={540} dir={1} /><Vcc x={1134} y={577} dir={1} />
      <Tx x={1064} y={533} w={14} t="R1" /><Tx x={1064} y={556} w={23} t="4.7k" /><Tx x={1120.500} y={528} w={25} t="VCC" />
      <Tx x={1064} y={570} w={15.500} t="R2" /><Tx x={1064} y={593} w={23} t="4.7k" /><Tx x={1120.500} y={565} w={25} t="VCC" />
      {/* controller */}
      <rect x="773" y="540" width="186" height="309" stroke={RED} strokeWidth="2" shapeRendering="crispEdges" />
      <L c={RED} d="M857 689.500h6M860.500 686v6" />
      <Tx x={772.500} y={534} w={55} t="MEGA8-P" /><Tx x={772.500} y={862} w={18} t="IC1" />
      {leftPins.map(([n, y, t, w]) => (
        <g key={n}>
          <L c={RED} d={`M749 ${y + 0.500}H${n === "1" ? 763 : 773}`} />
          <Tx x={n.length > 1 ? 749.500 : 756.500} y={y - 2} t={n} w={n.length > 1 ? 13 : undefined} s={11} />
          <Tx x={784} y={y + 3} w={w} t={t} s={10.800} />
        </g>
      ))}
      <path d="M773 548.500c-6-2-10 1-10 5s4 7 10 5" stroke={RED} />
      {rightPins.map(([n, y, t, w]) => (
        <g key={n}>
          <L c={RED} d={`M959 ${y + 0.500}h26`} />
          <Tx x={970} y={y - 2} t={n} w={n.length > 1 ? 13 : undefined} s={11} />
          <Tx x={947 - w} y={y + 3} w={w} t={t} s={10.800} />
        </g>
      ))}
      {/* reset */}
      <Res x={699} y={553} /><L d="M674 553.500h13M737 553.500h12" />
      <Vcc x={661} y={553} dir={-1} />
      <Tx x={693} y={545} w={15.500} t="R8" /><Tx x={693.500} y={569} w={20} t="10k" /><Tx x={648.500} y={574} w={25} t="VCC" />
      {/* supply capacitors */}
      <Gnd x={587} y={577} tx={584} ty={592} />
      <L d="M600 577.500h149M612.500 577v13M662.500 577v13M612.500 627v25.500h74v-50H749M662.500 627v12.500h12v-49H749" />
      <CapV x={612} y={590} /><CapV x={662} y={590} />
      <Tx x={620.500} y={600} w={16} t="C4" /><Tx x={620} y={625} w={35} t="100nF" />
      <Tx x={670} y={600} w={15} t="C5" /><Tx x={669.500} y={625} w={35} t="100nF" />
      {/* crystal */}
      <L d="M749 639.500h-49.500v50H662M749 664.500h-37.500v74H662M612.500 689v49.500H626M612 689.500h14M600 713.500h13M686.500 689v12M686.500 726v12" />
      <CapH x={626} y={689} /><CapH x={626} y={738} />
      <Gnd x={587} y={713} tx={584} ty={728} />
      <L c={RED} d="M686.500 701v7M686.500 719v8" /><L c={RED} w={2} d="M677 708h19M677 718h19M679 711.500h15v4h-15z" />
      <Tx x={635} y={680.500} w={15.500} t="C2" r /><Tx x={660.500} y={680.500} w={28} t="22pF" r />
      <Tx x={635} y={730.500} w={15.500} t="C3" r /><Tx x={660.500} y={730.500} w={25} t="22pf" r />
      <Tx x={681} y={700.500} w={14} t="Q1" r /><Tx x={699} y={700.500} w={42} t="16MHz" r />
      {/* C1 */}
      <L d="M749 701.500h-24.500v74H600M749 726.500h-12.500v111H600M662.500 775v14M662.500 825v13" />
      <CapV x={662} y={788} flip /><Vcc x={587} y={775} dir={-1} /><Gnd x={587} y={837} tx={584} ty={852} />
      <Tx x={574.500} y={797} w={25} t="VCC" /><Tx x={619} y={797.500} w={35.500} t="100nF" /><Tx x={638.500} y={823} w={14} t="C1" />
      {/* status LED */}
      <L d="M985 664.500h12M1033 664.500h13M1095 664.500h13" />
      <L c={RED} d="M997 664.500h36M1108 664.500h14" />
      <path d="M1008 658v13l13-6.500zM1021.500 658v13" stroke={RED} strokeWidth="1.800" />
      <path d="M1012 674l6.500 6.500m-4 0h4v-4M1018 673l6.500 6.500m-4 0h4v-4" stroke={RED} strokeWidth="1.300" />
      <Res x={1058} y={664} />
      <L c={RED} w={2} d="M1120 654v20" /><Tx x={1132} y={675} w={26} t="GND" r />
      <Tx x={970.500} y={644.500} w={61} t="TLLG4400" /><Tx x={1000} y={656} w={29} t="LED1" />
      <Tx x={1052} y={657} w={21} t="220" /><Tx x={1052} y={680} w={15} t="R5" />
      {/* receiver */}
      <Gnd x={1207} y={614} right={13} tx={1203.500} ty={629} />
      <L d="M1219 614.500h49.500v38H1281M1231.500 614v13M1231.500 664v12M1219 676.500h62M985 689.500h296" />
      <CapV x={1231} y={627} /><Vcc x={1206} y={676} dir={-1} />
      <Tx x={1239.500} y={637} w={16} t="C6" /><Tx x={1239} y={662} w={35} t="100nF" /><Tx x={1193.500} y={698} w={25} t="VCC" />
      <rect x="1306" y="639" width="74" height="62" stroke={RED} strokeWidth="2" shapeRendering="crispEdges" />
      <Tx x={1314} y={636} w={48.500} t="DT Rx35" />
      {[["GND", 652, 24], ["NC", 664, 15], ["VCC", 676, 22.500], ["CH3", 689, 21.500]].map(([t, y, w], i) => (
        <g key={t}><L c={RED} d={`M1281 ${y + 0.500}h${t === "VCC" ? 28 : 25}`} /><Tx x={1288} y={y - 2} t={String(i + 1)} s={11} /><Tx x={1317.500} y={y + 3} w={w} t={t} s={10.800} /></g>
      ))}
      {/* motor outputs */}
      <L d="M985 726.500h382.500V899M985 738.500h321.500V899M985 788.500h259.500V899M985 800.500h197.500V899M1132 924.500h249" />
      <Gnd x={1120} y={924} right={13} tx={1116.500} ty={938} />
      {escs.map(([x, p, a, b]) => (
        <g key={a}>
          <rect x={x} y="887" width="37" height="49" stroke={RED} strokeWidth="2" shapeRendering="crispEdges" />
          {[899, 911, 924].map((y) => <circle key={y} cx={p + 7.500} cy={y + 0.500} r="5" stroke={RED} />)}
          <L c={RED} d={`M${p} 911.500h3M${p + 10} 911.500h6M${p + 13.500} 909v5`} />
          <L d={`M${p} 899.500h13`} />
          <Tx x={p - 4.500} y={897} t="1" s={10.500} /><Tx x={p - 5.500} y={910} t="2" s={10.500} /><Tx x={p - 5.500} y={922} t="3" s={10.500} />
          <Tx x={x + 0.500} y={882.500} w={21} t={a} /><Tx x={x + 0.500} y={947.500} w={33} t={b} />
          <J at={[[p, 899], [p, 924]]} />
        </g>
      ))}
      <J at={[[996, 441], [1107, 441], [1157, 441], [1207, 441], [1355, 441], [1107, 503], [1157, 503], [1219, 503], [1219, 466], [1318, 466], [1318, 478], [1318, 503], [1355, 503],
        [1008, 478], [1021, 478], [1033, 478], [1046, 478], [1021, 540], [1046, 577], [612, 577], [662, 577], [612, 713], [686, 689], [686, 738], [662, 775], [662, 837], [1231, 614], [1231, 676]]} />
    </svg>
  );
}

const Pointer = styled.div`position: absolute; left: 1269px; top: 274px;`;
const Tri = ({ d }) => <Ico w={8} h={8}><path d={{ up: "M0 6h8L4 2z", down: "M0 2h8L4 6z", left: "M6 0v8L2 4z", right: "M2 0v8l4-4z" }[d]} fill="#000" /></Ico>;

function EagleWindow() {
  return (
    <Win>
      <TitleBar>
        <WinBtn kind="x" /><WinBtn kind="-" /><WinBtn kind="o" />
        <TitleText><Fit w={575}>1 Schematic - /home/ni-c/Projects/quadrofly/contrib/schematics/motorcontrol.sch - EAGLE 6.1.0 Light</Fit></TitleText>
      </TitleBar>
      <MenuBar><Strip from={453} h={20} items={menus.map(([x, w, a, b]) => [x, <Fit w={w}><u>{a}</u>{b}</Fit>])} /></MenuBar>
      <ToolBar $h={36}><Strip from={453} h={34} items={toolbar} /></ToolBar>
      <ToolBar $h={30}><Strip from={453} h={28} items={gridBar} /></ToolBar>
      <Main>
        <Toolbox>
          <TGrip />
          <TGrid>{toolsA.map((t, i) => <TSlot key={i}>{t}</TSlot>)}</TGrid>
          <TSep $m="3px 5px 2px 7px" />
          <TGrid>{toolsB.map((t, i) => <TSlot key={i}>{t}</TSlot>)}</TGrid>
          <TSep $m="3px 5px 2px 7px" />
          <TGrid>{toolsC.map((t, i) => <TSlot key={i}>{t}</TSlot>)}</TGrid>
          <Chevron><Ico w={8} h={8}><path d="M1 .5l3 2.500 3-2.500M1 4.500L4 7l3-2.500" stroke="#000" strokeWidth="1.500" /></Ico></Chevron>
        </Toolbox>
        <Right>
          <CmdRow>
            <Sunken $w={110} $mr={1}><Fit w={91}>0.1 inch (6.1 0.2)</Fit></Sunken>
            <Sunken $w={14} />
            <CmdInput><Caret /><Drop><Ico w={10} h={7}><path d="M1 1l4 4 4-4" stroke="#000" strokeWidth="2.500" /></Ico></Drop></CmdInput>
          </CmdRow>
          <CanvasRow>
            <CanvasArea><Schematic /></CanvasArea>
            <VBar>
              <BarBtn $b="0 0 1px"><Tri d="up" /></BarBtn>
              <BarGrip><Ico w={8} h={8} crisp><path d="M0 .5h8M0 3.500h8M0 6.500h8" stroke="#b5b0aa" /></Ico></BarGrip>
              <BarBtn $b="1px 0 0"><Tri d="down" /></BarBtn>
            </VBar>
          </CanvasRow>
          <HBar>
            <BarBtn $b="0 1px 0 0"><Tri d="left" /></BarBtn>
            <BarGrip><Ico w={8} h={8} crisp><path d="M.5 0v8M3.500 0v8M6.500 0v8" stroke="#b5b0aa" /></Ico></BarGrip>
            <BarBtn $b="0 0 0 1px"><Tri d="right" /></BarBtn>
          </HBar>
        </Right>
      </Main>
      <WinStatus>
        <Ico w={62} h={26}><circle cx="8" cy="13" r="7.500" fill="#e6e2dd" stroke="#c8c3bd" />{[0, 4, 8, 12].map((i) => <path key={i} d={`M${46 + i} 26l${16 - i} -${16 - i}`} stroke="#b9b4ae" />)}</Ico>
      </WinStatus>
    </Win>
  );
}

const Root = styled.div`position: relative; width: 1920px; height: 1080px; overflow: hidden;`;

export default function App() {
  return (
    <Root>
      <Global />
      <TopPanel>
        <PanelTitle><Fit w={189}>Control Panel - EAGLE 6.1.0 Light</Fit></PanelTitle>
        <Strip from={1517} h={24} items={indicators} />
      </TopPanel>
      <Body>
        <Launcher>
          {tiles.map((t, i) => (
            <LaunchRow key={i}><Mark n={t.n} /><Tile $bg={t.bg}>{t.el}</Tile><Mark n={t.right ? 1 : 0} right /></LaunchRow>
          ))}
        </Launcher>
        <Browser>
          <TabBar>
            <Tab $w={249} $visited><Fb /><TabText><Fit w={47}>Facebook</Fit></TabText><XIcon /></Tab>
            <Tab $w={248}><Ico><text x="0" y="7.500" fontSize="10.500" fontFamily="Liberation Sans" fontWeight="bold" fill="#e01818" textLength="15" lengthAdjust="spacingAndGlyphs">EL</text><text x="0" y="16" fontSize="10.500" fontFamily="Liberation Sans" fontWeight="bold" fill="#0e8a1c" textLength="15" lengthAdjust="spacingAndGlyphs">KO</text></Ico><TabText><Fit w={187}>Gold-Cap / Doppelschicht-Kondensator</Fit></TabText><XIcon /></Tab>
            <Tab $w={248}><Ico><rect x="1.500" y="1.500" width="13" height="13" rx="2" stroke="#666" strokeDasharray="2 2" /></Ico><TabText><Fit w={98}>Logbuch:Netzpolitik</Fit></TabText><XIcon /></Tab>
            <Tab $w={248}><Google /><TabText><Fit w={198}>source code documentation - doxygen - ...</Fit></TabText><XIcon /></Tab>
            <Tab $w={249} $on><Octo /><TabText><Fit w={67}>ni-c/quadrofly</Fit></TabText><XIcon /></Tab>
            <Tab $w={30}><Ico><path d="M5.500 1h5v4.500H15v5h-4.500V15h-5v-4.500H1v-5h4.500z" fill="#a9cf3c" stroke="#5f8a14" /></Ico></Tab>
            <TabTools><Ico w={15} h={15}><rect width="15" height="15" rx="1" fill="#9c9c9c" /><circle cx="4" cy="11.500" r="1.500" fill="#fff" /><path d="M3 7c3 0 5 2 5 5M3 3.500c5 0 8.500 3.500 8.500 8.500" stroke="#fff" strokeWidth="1.700" /></Ico><Down /></TabTools>
          </TabBar>
          <NavBar>
            <NavIcon $w={36}><Arrow back /></NavIcon>
            <NavIcon $w={37}><Arrow /></NavIcon>
            <NavIcon $w={35}><Ico w={20} h={24}><path d="M10 1l9 7v15H1V8z" fill="#555" stroke="#333" /><path d="M10 1l9 7v3H1V8z" fill="#999" /><circle cx="10" cy="6" r="1.800" fill="#eee" /><text x="10" y="20" fontSize="9" fontFamily="Liberation Sans" fontWeight="bold" fill="#fff" textAnchor="middle" textLength="17" lengthAdjust="spacingAndGlyphs">TAG</text></Ico></NavIcon>
            <Field $w={1225} $mr={10} $pl={8}>
              <Ico w={11} h={14}><path d="M2.500 6V4.500a3 3 0 016 0V6" stroke="#4f9a1f" strokeWidth="1.800" /><rect y="5.500" width="11" height="8" rx="1" fill="#5cab27" /></Ico>
              <Cert><Fit w={72}>GitHub, Inc. (US)</Fit></Cert>
              <Url><Fit w={161}>https://<b>github.com</b>/ni-c/quadrofly</Fit></Url>
              <Spread $g={5}>
                <Recoll />
                <Ico><path d="M8 1l2.200 4.800 5.300.6-4 3.600 1.100 5.200L8 12.600l-4.600 2.600L4.500 10l-4-3.600 5.300-.6z" fill="#fff" stroke="#bbb" /></Ico>
                <Down />
                <Ico><path d="M13 10.500A5.500 5.500 0 118 2.500c2 0 3 .7 4 1.800" stroke="#4a86c8" strokeWidth="3" /><path d="M15.500 1v7h-7z" fill="#4a86c8" /></Ico>
              </Spread>
            </Field>
            <Field $w={351} $mr={11} $pl={3}>
              <Ico><path d="M8 0h8v7l-8 2z" fill="#e02020" /><path d="M8 9l8-3v10H8z" fill="#128a3c" /><ellipse cx="5" cy="4.500" rx="3" ry="4" fill="#2c5fd0" transform="rotate(-20 5 4.500)" /><ellipse cx="5" cy="13" rx="4" ry="3" fill="#f2b01c" /><path d="M9 1l-1 7" stroke="#fff" strokeWidth="2" /></Ico>
              <Cell $w={4} /><Down />
              <Hint><Fit w={34}>Google</Fit></Hint>
              <Ico w={17} h={17}><circle cx="7" cy="7" r="5" fill="#cfe0f5" stroke="#1d2f80" strokeWidth="2.300" /><path d="M11 11l4.500 5" stroke="#1d2f80" strokeWidth="3" /></Ico>
            </Field>
            <NavIcon $w={28}><Ico w={23} h={23}><circle cx="12" cy="9" r="7" stroke="#556" strokeWidth="2.500" strokeDasharray="2 1.500" fill="#dfe5ea" /><path d="M2 10h20v3h-2v7h2v2H1v-2h2v-7H2z" fill="#c6d3dc" stroke="#456" /><path d="M7 13v7M17 13v7" stroke="#456" /><path d="M12 11h6v12l-3-3-3 3z" fill="#6fb1e6" stroke="#3f7db5" strokeWidth=".7" /></Ico></NavIcon>
            <NavIcon $w={24}><Down /></NavIcon>
            <NavIcon $w={35}><SQ /></NavIcon>
            <NavIcon $w={17}><Down /></NavIcon>
            <NavIcon $w={28}><Ico><path d="M3 9L0 14M5 10l-1 5M8 10l1 4M2 6L0 4M10 9l5 2" stroke="#777" strokeWidth=".8" /><ellipse cx="6" cy="8" rx="3.500" ry="2.500" fill="#222" transform="rotate(-25 6 8)" /><path d="M7 7c1-5 5-7 6-6l2 2c0 3-4 5-7 5z" fill="#bbb" /></Ico></NavIcon>
            <NavIcon $w={8}><Down /></NavIcon>
          </NavBar>
          <Marks>
            <Strip from={65} h={30} items={bookmarks} />
            <Strip from={65} h={30} items={stumbleBar} />
          </Marks>
          <Viewport>
            <PageBody>
              <FileBox>
                <FileRow $h={33}>
                  <FileCol $w={20}><FileIcon /></FileCol><FileCol $w={203}><a>README.md</a></FileCol><FileCol $w={160}><Fit w={79}>2 months ago</Fit></FileCol><FileCol $w={200}><Fit w={155}>Updated schematics [<a>ni-c</a>]</Fit></FileCol>
                </FileRow>
                <FileRow $h={35} $last>
                  <FileCol $w={20}><FileIcon /></FileCol><FileCol $w={203}><a><Fit w={102}>quadrofly.doxyfile</Fit></a></FileCol><FileCol $w={160}><Fit w={79}>2 months ago</Fit></FileCol><FileCol $w={200}><Fit w={160}>Added Documentation [<a>ni-c</a>]</Fit></FileCol>
                </FileRow>
              </FileBox>
              <Readme>
                <ReadmeHead><Ico w={16} h={14}><path d="M.5 1.500c3-1 5-1 7.500.5 2.500-1.500 4.500-1.500 7.500-.5v11c-3-1-5-1-7.500.5-2.500-1.500-4.500-1.500-7.500-.5z" fill="#fff" stroke="#555" /><path d="M8 2v11M2.500 4h4M2.500 6.500h4M2.500 9h4M9.500 4h4M9.500 6.500h4M9.500 9h4" stroke="#555" /></Ico><Fit w={98}>README.md</Fit></ReadmeHead>
              </Readme>
              <Footer>
                <svg width="130" height="94" viewBox="526 957 130 94">
                  <circle cx="591" cy="1062" r="59" fill="none" stroke="#e6e6e6" strokeWidth="11" />
                  <path d="M554 1053c0-8 2-13 6-17-2-4-1-10 1-12 5 1 9 3 13 6 10-2 22-2 32 0 4-3 8-5 14-6 2 4 2 8 1 12 5 5 7 10 8 17v5h-75z" fill="#e4e4e4" stroke="#dcdcdc" />
                </svg>
                <FootCols>
                  {footer.map(([h, w, links]) => (
                    <FootCol key={h}><h4><Fit w={w}>{h}</Fit></h4>{links.map(([t, lw]) => <a key={t}><Fit w={lw}>{t}</Fit></a>)}</FootCol>
                  ))}
                </FootCols>
              </Footer>
            </PageBody>
            <Scroll>
              <ScrollBtn $up><Ico w={6} h={4}><path d="M0 4h6L3 0z" fill="#666" /></Ico></ScrollBtn>
              <ScrollThumb><Ico w={6} h={7} crisp><path d="M0 .5h6M0 3.500h6M0 6.500h6" stroke="#aaa" /></Ico></ScrollThumb>
              <ScrollBtn><Ico w={6} h={4}><path d="M0 0h6L3 4z" fill="#666" /></Ico></ScrollBtn>
            </Scroll>
          </Viewport>
          <StatusBar><Strip from={65} h={27} items={statusItems} /></StatusBar>
        </Browser>
      </Body>
      <EagleWindow />
      <Pointer><Ico w={13} h={20}><path d="M1 1v15l3.500-3.300L7 18.500l2.500-1L7 12h5z" fill="#fff" stroke="#111" strokeWidth="1.200" /></Ico></Pointer>
    </Root>
  );
}
